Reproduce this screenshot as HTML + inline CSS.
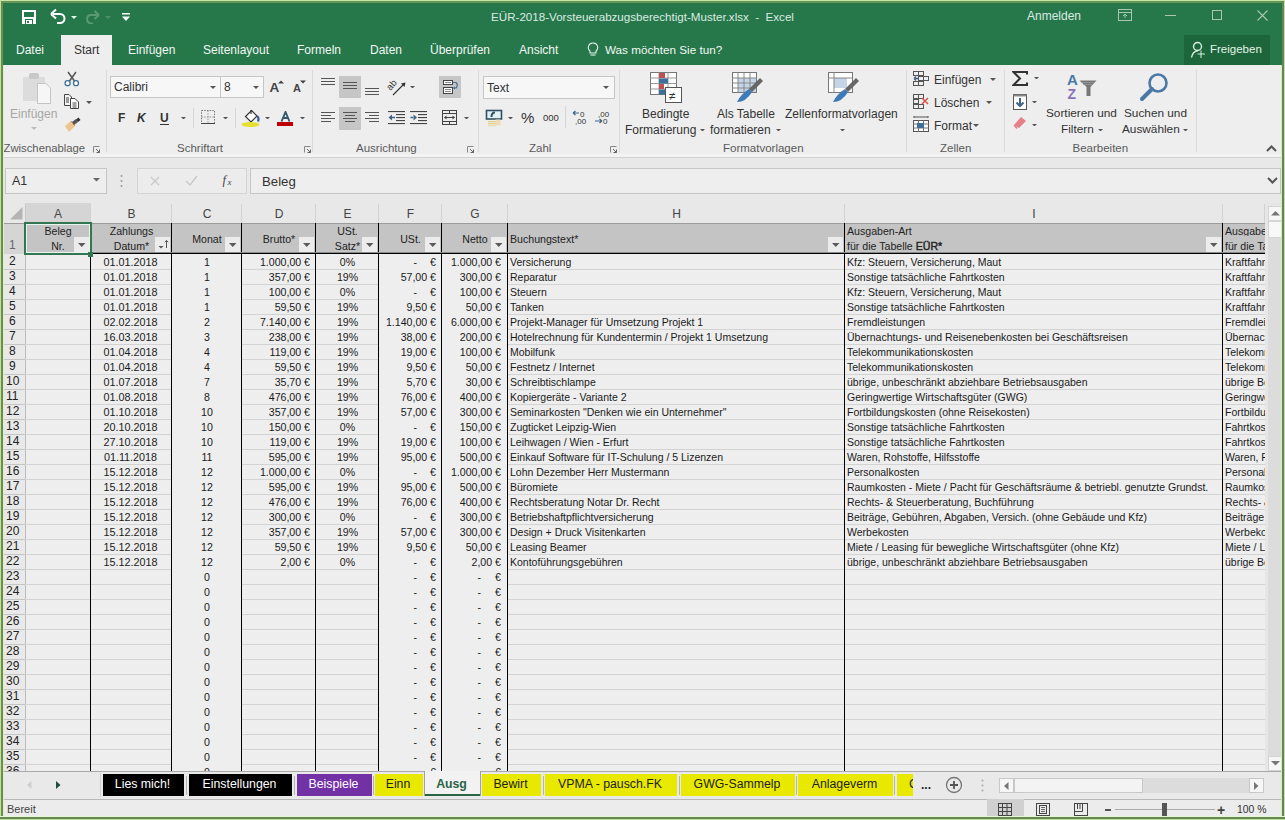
<!DOCTYPE html>
<html><head><meta charset="utf-8"><title>Excel</title><style>
html,body{margin:0;padding:0;}
body{width:1285px;height:820px;position:relative;overflow:hidden;font-family:"Liberation Sans", sans-serif;background:#26784b;}
body>div,body>svg{position:absolute;}
</style></head>
<body>
<div style="left:0px;top:0px;width:1285px;height:820px;background:#26784b"></div><svg style="left:22px;top:10px;" width="14" height="14" viewBox="0 0 14 14"><rect x="0" y="0" width="14" height="14" fill="#fff"/><rect x="2" y="2" width="10" height="5" fill="#26784b"/><rect x="3" y="9" width="8" height="5" fill="#26784b"/><rect x="4" y="10" width="6" height="4" fill="#fff"/><rect x="5" y="11" width="2" height="2" fill="#26784b"/></svg><svg style="left:50px;top:8px;" width="16" height="17" viewBox="0 0 16 17"><path d="M3 6 H10 A4.5 4.5 0 0 1 10 15 H7" fill="none" stroke="#fff" stroke-width="2"/><path d="M1 6 L6 1.5 M1 6 L6 10.5" stroke="#fff" stroke-width="2" fill="none"/></svg><svg style="left:71px;top:15.5px;" width="6" height="3" viewBox="0 0 6 3"><path d="M0 0 L6 0 L3 3 Z" fill="#dfe"/></svg><svg style="left:85px;top:9px;" width="15" height="15" viewBox="0 0 15 15"><path d="M12 6 H5 A4.5 4.5 0 0 0 5 14.5 H8" fill="none" stroke="#5a9a72" stroke-width="2"/><path d="M14 6 L9.5 2 M14 6 L9.5 10" stroke="#5a9a72" stroke-width="2" fill="none"/></svg><svg style="left:105px;top:15.5px;" width="6" height="3" viewBox="0 0 6 3"><path d="M0 0 L6 0 L3 3 Z" fill="#4f8f67"/></svg><svg style="left:121px;top:13px;" width="10" height="9" viewBox="0 0 10 9"><rect x="1" y="0" width="8" height="1.5" fill="#fff"/><path d="M1 3.5 H9 L5 8 Z" fill="#fff"/></svg><div style="left:441px;top:10.68px;width:403px;text-align:center;font-size:11.6px;line-height:11.6px;color:#dcebe1;white-space:pre;">EÜR-2018-Vorsteuerabzugsberechtigt-Muster.xlsx  -  Excel</div><div style="left:1027px;top:10.34px;font-size:12px;line-height:12px;color:#dcebe1;white-space:pre;">Anmelden</div><svg style="left:1118px;top:9px;" width="14" height="12" viewBox="0 0 14 12"><rect x="0.5" y="0.5" width="13" height="11" fill="none" stroke="#a9c7b3"/><path d="M0.5 3.5 H13.5" stroke="#a9c7b3"/><path d="M7 5 V9 M5 7 L7 5 L9 7" stroke="#a9c7b3" fill="none"/></svg><div style="left:1165px;top:15px;width:11px;height:1px;background:#a9c7b3"></div><div style="left:1212px;top:10px;width:10px;height:10px;border:1px solid #a9c7b3;box-sizing:border-box"></div><svg style="left:1257px;top:10px;" width="11" height="11" viewBox="0 0 11 11"><path d="M0.5 0.5 L10.5 10.5 M10.5 0.5 L0.5 10.5" stroke="#a9c7b3" stroke-width="1.1"/></svg><div style="left:61px;top:35px;width:51px;height:31px;background:#eeeeee"></div><div style="left:16px;top:44.14px;font-size:12px;line-height:12px;color:#f2f7f3;white-space:pre;">Datei</div><div style="left:74px;top:44.14px;font-size:12px;line-height:12px;color:#333;white-space:pre;">Start</div><div style="left:128px;top:44.14px;font-size:12px;line-height:12px;color:#f2f7f3;white-space:pre;">Einfügen</div><div style="left:203px;top:44.14px;font-size:12px;line-height:12px;color:#f2f7f3;white-space:pre;">Seitenlayout</div><div style="left:297px;top:44.14px;font-size:12px;line-height:12px;color:#f2f7f3;white-space:pre;">Formeln</div><div style="left:370px;top:44.14px;font-size:12px;line-height:12px;color:#f2f7f3;white-space:pre;">Daten</div><div style="left:430px;top:44.14px;font-size:12px;line-height:12px;color:#f2f7f3;white-space:pre;">Überprüfen</div><div style="left:519px;top:44.14px;font-size:12px;line-height:12px;color:#f2f7f3;white-space:pre;">Ansicht</div><svg style="left:587px;top:42px;" width="12" height="15" viewBox="0 0 12 15"><path d="M6 1 A4.5 4.5 0 0 1 9 9 V11 H3 V9 A4.5 4.5 0 0 1 6 1 Z" fill="none" stroke="#e8f0ea" stroke-width="1.1"/><path d="M3.5 13 H8.5" stroke="#e8f0ea" stroke-width="1.1"/></svg><div style="left:605px;top:44.40px;font-size:11.7px;line-height:11.7px;color:#f2f7f3;white-space:pre;">Was möchten Sie tun?</div><div style="left:1184px;top:35px;width:86px;height:30px;background:#1d663b"></div><svg style="left:1190px;top:41px;" width="17" height="18" viewBox="0 0 17 18"><circle cx="7.5" cy="5.5" r="4" fill="none" stroke="#d8efdf" stroke-width="1.4"/><path d="M1.5 16.5 Q2.5 10.5 8 9.5" fill="none" stroke="#d8efdf" stroke-width="1.4"/><path d="M11 9.5 V17 M7.5 13 H15" stroke="#d8efdf" stroke-width="1"/></svg><div style="left:1210px;top:43.77px;font-size:11.5px;line-height:11.5px;color:#e4f4e8;white-space:pre;">Freigeben</div><div style="left:3px;top:65px;width:1279px;height:92px;background:#eeeeee"></div><div style="left:3px;top:154px;width:1279px;height:3px;background:#f3f3f3"></div><div style="left:3px;top:157px;width:1279px;height:1px;background:#d2d2d2"></div><div style="left:106px;top:70px;width:1px;height:82px;background:#dadada"></div><div style="left:312px;top:70px;width:1px;height:82px;background:#dadada"></div><div style="left:478px;top:70px;width:1px;height:82px;background:#dadada"></div><div style="left:619px;top:70px;width:1px;height:82px;background:#dadada"></div><div style="left:906px;top:70px;width:1px;height:82px;background:#dadada"></div><div style="left:1004px;top:70px;width:1px;height:82px;background:#dadada"></div><div style="left:1196px;top:70px;width:1px;height:82px;background:#dadada"></div><div style="left:3.5px;top:143.43px;font-size:11.3px;line-height:11.3px;color:#5a5a5a;white-space:pre;">Zwischenablage</div><div style="left:177px;top:143.27px;font-size:11.5px;line-height:11.5px;color:#5a5a5a;white-space:pre;">Schriftart</div><div style="left:356px;top:143.27px;font-size:11.5px;line-height:11.5px;color:#5a5a5a;white-space:pre;">Ausrichtung</div><div style="left:529px;top:143.27px;font-size:11.5px;line-height:11.5px;color:#5a5a5a;white-space:pre;">Zahl</div><div style="left:723px;top:143.27px;font-size:11.5px;line-height:11.5px;color:#5a5a5a;white-space:pre;">Formatvorlagen</div><div style="left:940px;top:143.27px;font-size:11.5px;line-height:11.5px;color:#5a5a5a;white-space:pre;">Zellen</div><div style="left:1072.5px;top:143.27px;font-size:11.5px;line-height:11.5px;color:#5a5a5a;white-space:pre;">Bearbeiten</div><svg style="left:93px;top:146px;" width="8" height="7" viewBox="0 0 8 7"><path d="M0.5 6.5 V0.5 H6.5" fill="none" stroke="#888"/><path d="M3 3 L6.5 6.5 M6.5 3.5 V6.5 H3.5" fill="none" stroke="#666"/></svg><svg style="left:304px;top:146px;" width="8" height="7" viewBox="0 0 8 7"><path d="M0.5 6.5 V0.5 H6.5" fill="none" stroke="#888"/><path d="M3 3 L6.5 6.5 M6.5 3.5 V6.5 H3.5" fill="none" stroke="#666"/></svg><svg style="left:467px;top:146px;" width="8" height="7" viewBox="0 0 8 7"><path d="M0.5 6.5 V0.5 H6.5" fill="none" stroke="#888"/><path d="M3 3 L6.5 6.5 M6.5 3.5 V6.5 H3.5" fill="none" stroke="#666"/></svg><svg style="left:610px;top:146px;" width="8" height="7" viewBox="0 0 8 7"><path d="M0.5 6.5 V0.5 H6.5" fill="none" stroke="#888"/><path d="M3 3 L6.5 6.5 M6.5 3.5 V6.5 H3.5" fill="none" stroke="#666"/></svg><svg style="left:1266px;top:145px;" width="11" height="7" viewBox="0 0 11 7"><path d="M1 6 L5.5 1.5 L10 6" fill="none" stroke="#555" stroke-width="2"/></svg><svg style="left:22px;top:72px;" width="30" height="33" viewBox="0 0 30 33"><rect x="1" y="5" width="22" height="24" rx="1" fill="#dcdcdc"/><rect x="7" y="1" width="10" height="6" rx="2" fill="#c8c8c8"/><path d="M15.5 11.5 H24 L28.5 16 V31.5 H15.5 Z" fill="#f6f6f6" stroke="#c4c4c4"/></svg><div style="left:10px;top:107.84px;font-size:12px;line-height:12px;color:#a6a6a6;white-space:pre;">Einfügen</div><svg style="left:31px;top:126.5px;" width="6" height="3" viewBox="0 0 6 3"><path d="M0 0 L6 0 L3 3 Z" fill="#bbb"/></svg><svg style="left:64px;top:71px;" width="16" height="16" viewBox="0 0 16 16"><path d="M4 1 L10.5 10 M12 1 L5.5 10" stroke="#555" stroke-width="1.5"/><circle cx="3.6" cy="12.2" r="2.5" fill="#fff" stroke="#3d6f98" stroke-width="1.3"/><circle cx="12" cy="12.2" r="2.5" fill="#fff" stroke="#3d6f98" stroke-width="1.3"/></svg><svg style="left:64px;top:94px;" width="16" height="16" viewBox="0 0 16 16"><path d="M0.5 0.5 H5 L7.5 3 V11.5 H0.5 Z" fill="#f4f4f4" stroke="#444"/><path d="M2 4 H5 M2 6 H5 M2 8 H5" stroke="#444"/><path d="M6.5 4.5 H11 L14.5 8 V14.5 H6.5 Z" fill="#fff" stroke="#444"/><path d="M8.5 9 H12.5 M8.5 11 H12.5 M8.5 13 H12.5" stroke="#444"/></svg><svg style="left:86px;top:100.5px;" width="6" height="3" viewBox="0 0 6 3"><path d="M0 0 L6 0 L3 3 Z" fill="#555"/></svg><svg style="left:64px;top:117px;" width="17" height="16" viewBox="0 0 17 16"><path d="M1 9 L7 4 L11 9 L5 15 Z" fill="#ebc48f"/><path d="M7 4 L11 9" stroke="#b89060" stroke-width="1"/><path d="M8 5 L12 2 L14 5 L10 8 Z" fill="#555"/><path d="M12 2.5 L14.5 0.5 L16.5 3 L14 5 Z" fill="#333"/></svg><div style="left:110px;top:76px;width:111px;height:22px;background:#f7f7f7;border:1px solid #c6c6c6;box-sizing:border-box"></div><div style="left:114px;top:81.34px;font-size:12px;line-height:12px;color:#333;white-space:pre;">Calibri</div><svg style="left:210px;top:85.5px;" width="6" height="3" viewBox="0 0 6 3"><path d="M0 0 L6 0 L3 3 Z" fill="#555"/></svg><div style="left:220px;top:76px;width:44px;height:22px;background:#f7f7f7;border:1px solid #c6c6c6;box-sizing:border-box"></div><div style="left:224px;top:81.34px;font-size:12px;line-height:12px;color:#333;white-space:pre;">8</div><svg style="left:253px;top:85.5px;" width="6" height="3" viewBox="0 0 6 3"><path d="M0 0 L6 0 L3 3 Z" fill="#555"/></svg><div style="left:269.5px;top:81.37px;font-size:13.5px;line-height:13.5px;color:#444;white-space:pre;font-weight:bold">A</div><svg style="left:278px;top:80px;" width="6" height="4" viewBox="0 0 6 4"><path d="M0 3.5 L3 0.5 L6 3.5 Z" fill="#444"/></svg><div style="left:293px;top:83.49px;font-size:11px;line-height:11px;color:#444;white-space:pre;font-weight:bold">A</div><svg style="left:299.5px;top:80px;" width="6" height="4" viewBox="0 0 6 4"><path d="M0 0.5 L3 3.5 L6 0.5 Z" fill="#444"/></svg><div style="left:118px;top:111.84px;font-size:12px;line-height:12px;color:#333;white-space:pre;font-weight:bold">F</div><div style="left:137px;top:111.84px;font-size:12px;line-height:12px;color:#333;white-space:pre;font-weight:bold;font-style:italic">K</div><div style="left:160px;top:111.84px;font-size:12px;line-height:12px;color:#333;white-space:pre;font-weight:bold">U</div><div style="left:160px;top:124px;width:9px;height:1px;background:#333"></div><svg style="left:180.5px;top:116.75px;" width="5.0" height="2.5" viewBox="0 0 5.0 2.5"><path d="M0 0 L5.0 0 L2.5 2.5 Z" fill="#555"/></svg><div style="left:193px;top:108px;width:1px;height:20px;background:#d6d6d6"></div><svg style="left:201px;top:110px;" width="14" height="14" viewBox="0 0 14 14"><rect x="0.5" y="0.5" width="13" height="13" fill="none" stroke="#777" stroke-dasharray="1.5 1.2"/><path d="M7 0.5 V13.5 M0.5 7 H13.5" stroke="#999" stroke-dasharray="1.5 1.2"/><path d="M0 13.5 H14" stroke="#444"/></svg><svg style="left:222.5px;top:116.75px;" width="5.0" height="2.5" viewBox="0 0 5.0 2.5"><path d="M0 0 L5.0 0 L2.5 2.5 Z" fill="#555"/></svg><div style="left:235px;top:108px;width:1px;height:20px;background:#d6d6d6"></div><svg style="left:240px;top:108px;" width="21" height="19" viewBox="0 0 21 19"><path d="M11.5 2.5 L17 8 L11 14 L5.5 8.5 Z" fill="#fff" stroke="#333" stroke-width="1.2"/><path d="M11 2 V6" stroke="#333" stroke-width="1.2"/><path d="M17 8 Q19.5 10 18 13.5" fill="none" stroke="#3d5fa8" stroke-width="2.2"/><ellipse cx="10.5" cy="16.5" rx="9" ry="2.5" fill="#e8e030"/></svg><svg style="left:264.5px;top:116.75px;" width="5.0" height="2.5" viewBox="0 0 5.0 2.5"><path d="M0 0 L5.0 0 L2.5 2.5 Z" fill="#555"/></svg><svg style="left:277px;top:111px;" width="17" height="16" viewBox="0 0 17 16"><path d="M4.5 10.5 L8.5 1 L12.5 10.5 M6 7 H11" fill="none" stroke="#35586a" stroke-width="1.9"/><rect x="0" y="11" width="16" height="4" fill="#c00000"/></svg><svg style="left:299.5px;top:116.75px;" width="5.0" height="2.5" viewBox="0 0 5.0 2.5"><path d="M0 0 L5.0 0 L2.5 2.5 Z" fill="#555"/></svg><svg style="left:321px;top:78px;" width="14" height="11" viewBox="0 0 14 11"><rect x="0" y="0" width="14" height="1" fill="#555"/><rect x="0" y="3" width="14" height="1" fill="#555"/><rect x="0" y="6" width="14" height="1" fill="#555"/></svg><div style="left:339px;top:76px;width:22px;height:22px;background:#c6c6c6"></div><svg style="left:343px;top:82px;" width="14" height="11" viewBox="0 0 14 11"><rect x="0" y="0" width="14" height="1" fill="#555"/><rect x="0" y="3" width="14" height="1" fill="#555"/><rect x="0" y="6" width="14" height="1" fill="#555"/></svg><svg style="left:365px;top:88px;" width="14" height="11" viewBox="0 0 14 11"><rect x="0" y="0" width="14" height="1" fill="#555"/><rect x="0" y="3" width="14" height="1" fill="#555"/><rect x="0" y="6" width="14" height="1" fill="#555"/></svg><svg style="left:387px;top:78px;" width="20" height="18" viewBox="0 0 20 18"><text x="0" y="0" font-size="9.5" font-family="Liberation Sans" fill="#333" transform="translate(3.5 13) rotate(-50)">ab</text><path d="M6 17 L17 6" stroke="#333" stroke-width="1.1"/><path d="M18.5 4.5 L14 5.5 L17.5 9 Z" fill="#333"/></svg><svg style="left:409.5px;top:85.75px;" width="5.0" height="2.5" viewBox="0 0 5.0 2.5"><path d="M0 0 L5.0 0 L2.5 2.5 Z" fill="#555"/></svg><div style="left:439px;top:76px;width:22px;height:22px;background:#c6c6c6"></div><svg style="left:441px;top:78px;" width="19" height="18" viewBox="0 0 19 18"><rect x="2.5" y="2.5" width="9" height="4" fill="#fff" stroke="#444"/><path d="M4 4.5 H10" stroke="#888"/><rect x="2.5" y="9.5" width="9" height="6" fill="#fff" stroke="#444"/><path d="M4 11.5 H10 M4 13.5 H10" stroke="#888"/><path d="M12 4.5 H15 Q17.5 7 15 10 H12.5" fill="none" stroke="#3d6f98" stroke-width="1.2"/><path d="M12 10 L14 8.5 V11.5 Z" fill="#3d6f98"/></svg><svg style="left:321px;top:112px;" width="14" height="14" viewBox="0 0 14 14"><rect x="0" y="0" width="14" height="1" fill="#555"/><rect x="0" y="3" width="10" height="1" fill="#555"/><rect x="0" y="6" width="14" height="1" fill="#555"/><rect x="0" y="9" width="10" height="1" fill="#555"/></svg><div style="left:339px;top:107px;width:22px;height:23px;background:#c6c6c6"></div><svg style="left:343px;top:112px;" width="14" height="12" viewBox="0 0 14 12"><rect x="0" y="0" width="14" height="1" fill="#555"/><rect x="2" y="3" width="10" height="1" fill="#555"/><rect x="0" y="6" width="14" height="1" fill="#555"/><rect x="2" y="9" width="10" height="1" fill="#555"/></svg><svg style="left:365px;top:112px;" width="14" height="12" viewBox="0 0 14 12"><rect x="0" y="0" width="14" height="1" fill="#555"/><rect x="4" y="3" width="10" height="1" fill="#555"/><rect x="0" y="6" width="14" height="1" fill="#555"/><rect x="4" y="9" width="10" height="1" fill="#555"/></svg><svg style="left:388px;top:110px;" width="17" height="15" viewBox="0 0 17 15"><rect x="0" y="1" width="17" height="1.1" fill="#444"/><rect x="8" y="4" width="9" height="1.1" fill="#444"/><rect x="8" y="7" width="9" height="1.1" fill="#444"/><rect x="8" y="10" width="9" height="1.1" fill="#444"/><rect x="0" y="13" width="17" height="1.1" fill="#444"/><path d="M0.5 7.5 L4 4.5 V10.5 Z M3 6.8 H7 V8.2 H3 Z" fill="#3d6488"/></svg><svg style="left:410px;top:110px;" width="17" height="15" viewBox="0 0 17 15"><rect x="0" y="1" width="17" height="1.1" fill="#444"/><rect x="8" y="4" width="9" height="1.1" fill="#444"/><rect x="8" y="7" width="9" height="1.1" fill="#444"/><rect x="8" y="10" width="9" height="1.1" fill="#444"/><rect x="0" y="13" width="17" height="1.1" fill="#444"/><path d="M7 7.5 L3.5 4.5 V10.5 Z M0.5 6.8 H4 V8.2 H0.5 Z" fill="#3d6488"/></svg><svg style="left:442px;top:110px;" width="15" height="15" viewBox="0 0 15 15"><rect x="0.5" y="0.5" width="14" height="14" fill="none" stroke="#444"/><path d="M0.5 3.5 H14.5 M0.5 11.5 H14.5 M7.5 0.5 V3.5 M7.5 11.5 V14.5" stroke="#444"/><path d="M2.5 7.5 H12.5" stroke="#444"/><path d="M2 7.5 L4.5 5.5 V9.5 Z M13 7.5 L10.5 5.5 V9.5 Z" fill="#444"/></svg><svg style="left:463.5px;top:116.75px;" width="5.0" height="2.5" viewBox="0 0 5.0 2.5"><path d="M0 0 L5.0 0 L2.5 2.5 Z" fill="#555"/></svg><div style="left:483px;top:76px;width:132px;height:23px;background:#f7f7f7;border:1px solid #c6c6c6;box-sizing:border-box"></div><div style="left:487px;top:81.84px;font-size:12px;line-height:12px;color:#333;white-space:pre;">Text</div><svg style="left:603px;top:85.5px;" width="6" height="3" viewBox="0 0 6 3"><path d="M0 0 L6 0 L3 3 Z" fill="#555"/></svg><svg style="left:485px;top:109px;" width="18" height="18" viewBox="0 0 18 18"><rect x="1.5" y="1.5" width="15" height="8.5" fill="#e2f0f4" stroke="#34505e" stroke-width="1.6"/><path d="M6.5 8 Q6.5 3.5 10 3.5" fill="none" stroke="#2f5560" stroke-width="2"/><rect x="3" y="12" width="8" height="1.2" fill="#e6cf80"/><rect x="3" y="14" width="8" height="1.2" fill="#e6cf80"/><rect x="3" y="16" width="8" height="1.2" fill="#ecdca8"/><rect x="10.5" y="10.5" width="5" height="6" fill="#f2dcb8"/></svg><svg style="left:507.5px;top:116.75px;" width="5.0" height="2.5" viewBox="0 0 5.0 2.5"><path d="M0 0 L5.0 0 L2.5 2.5 Z" fill="#555"/></svg><div style="left:521px;top:110.30px;font-size:15px;line-height:15px;color:#333;white-space:pre;">%</div><div style="left:543px;top:112.96px;font-size:9.5px;line-height:9.5px;color:#333;white-space:pre;">000</div><div style="left:565px;top:106px;width:1px;height:22px;background:#d6d6d6"></div><svg style="left:572px;top:109px;" width="17" height="17" viewBox="0 0 17 17"><text x="8" y="8" font-size="8" font-family="Liberation Sans" fill="#333">0</text><text x="3" y="15" font-size="8" font-family="Liberation Sans" fill="#333">,00</text><path d="M1 4 H7 M1 4 L3.5 2 M1 4 L3.5 6" stroke="#3d6488" fill="none" stroke-width="1.2"/></svg><svg style="left:594px;top:109px;" width="17" height="17" viewBox="0 0 17 17"><text x="4" y="8" font-size="8" font-family="Liberation Sans" fill="#333">,00</text><text x="9" y="15" font-size="8" font-family="Liberation Sans" fill="#333">0</text><path d="M1 12 H8 M8 12 L5.5 10 M8 12 L5.5 14" stroke="#3d6488" fill="none" stroke-width="1.2"/></svg><svg style="left:650px;top:72px;" width="33" height="32" viewBox="0 0 33 32"><g stroke="#777" fill="#fff"><rect x="0.5" y="0.5" width="26" height="22"/></g><path d="M9 0.5 V22.5 M18 0.5 V22.5 M0.5 6 H26.5 M0.5 11.5 H26.5 M0.5 17 H26.5" stroke="#999"/><rect x="9" y="1" width="6" height="5" fill="#c0504d"/><rect x="9" y="6.5" width="9" height="5" fill="#3d6f9a"/><rect x="9" y="12" width="5" height="5" fill="#c0504d"/><rect x="9" y="17.5" width="7" height="5" fill="#3d6f9a"/><rect x="15.5" y="15.5" width="16" height="15" fill="#fff" stroke="#555"/><text x="19" y="28" font-size="12" font-family="Liberation Sans" fill="#333">≠</text></svg><div style="left:642px;top:107.84px;font-size:12px;line-height:12px;color:#333;white-space:pre;">Bedingte</div><div style="left:625px;top:123.84px;font-size:12px;line-height:12px;color:#333;white-space:pre;">Formatierung</div><svg style="left:699.5px;top:128.75px;" width="5.0" height="2.5" viewBox="0 0 5.0 2.5"><path d="M0 0 L5.0 0 L2.5 2.5 Z" fill="#555"/></svg><svg style="left:732px;top:72px;" width="31" height="31" viewBox="0 0 31 31"><rect x="0.5" y="0.5" width="24" height="20" fill="#fff" stroke="#777"/><rect x="6" y="6" width="18" height="14" fill="#c5d5e8"/><path d="M6 0.5 V20.5 M12 0.5 V20.5 M18 0.5 V20.5 M0.5 6 H24.5 M0.5 11 H24.5 M0.5 16 H24.5" stroke="#888"/><path d="M28 6 L31 9 L20 20 L17 17 Z" fill="#666"/><path d="M17 17 L20 20 Q14 30 5 30 Q9 22 17 17 Z" fill="#3d7ab8"/></svg><div style="left:717px;top:107.84px;font-size:12px;line-height:12px;color:#333;white-space:pre;">Als Tabelle</div><div style="left:710px;top:123.84px;font-size:12px;line-height:12px;color:#333;white-space:pre;">formatieren</div><svg style="left:775.5px;top:128.75px;" width="5.0" height="2.5" viewBox="0 0 5.0 2.5"><path d="M0 0 L5.0 0 L2.5 2.5 Z" fill="#555"/></svg><svg style="left:828px;top:72px;" width="31" height="31" viewBox="0 0 31 31"><rect x="0.5" y="0.5" width="24" height="20" fill="#fff" stroke="#777"/><rect x="6" y="6" width="13" height="10" fill="#c5d5e8"/><path d="M0.5 6 H24.5 M6 0.5 V20.5" stroke="#888"/><path d="M28 6 L31 9 L20 20 L17 17 Z" fill="#666"/><path d="M17 17 L20 20 Q14 30 5 30 Q9 22 17 17 Z" fill="#3d7ab8"/></svg><div style="left:785px;top:107.84px;font-size:12px;line-height:12px;color:#333;white-space:pre;">Zellenformatvorlagen</div><svg style="left:839.5px;top:128.75px;" width="5.0" height="2.5" viewBox="0 0 5.0 2.5"><path d="M0 0 L5.0 0 L2.5 2.5 Z" fill="#555"/></svg><svg style="left:913px;top:71px;" width="18" height="16" viewBox="0 0 18 16"><rect x="0.5" y="0.5" width="5" height="4" fill="none" stroke="#555"/><rect x="5.5" y="0.5" width="5" height="4" fill="none" stroke="#555"/><rect x="5.5" y="5.5" width="5" height="4" fill="none" stroke="#555"/><rect x="10.5" y="5.5" width="5" height="4" fill="none" stroke="#555"/><rect x="0.5" y="10.5" width="5" height="4" fill="none" stroke="#555"/><rect x="5.5" y="10.5" width="5" height="4" fill="none" stroke="#555"/><path d="M1 7.5 H5 M1 7.5 L3 5.5 M1 7.5 L3 9.5" stroke="#3d6488" fill="none" stroke-width="1.3"/></svg><div style="left:934px;top:73.54px;font-size:12px;line-height:12px;color:#333;white-space:pre;">Einfügen</div><svg style="left:990px;top:77.5px;" width="6" height="3" viewBox="0 0 6 3"><path d="M0 0 L6 0 L3 3 Z" fill="#555"/></svg><svg style="left:913px;top:94px;" width="18" height="16" viewBox="0 0 18 16"><rect x="0.5" y="0.5" width="5" height="4" fill="none" stroke="#555"/><rect x="5.5" y="0.5" width="5" height="4" fill="none" stroke="#555"/><rect x="0.5" y="5.5" width="5" height="4" fill="none" stroke="#555"/><rect x="0.5" y="10.5" width="5" height="4" fill="none" stroke="#555"/><rect x="5.5" y="10.5" width="5" height="4" fill="none" stroke="#555"/><path d="M9 4 L15 10 M15 4 L9 10" stroke="#d9534f" stroke-width="1.5"/></svg><div style="left:934px;top:96.54px;font-size:12px;line-height:12px;color:#333;white-space:pre;">Löschen</div><svg style="left:986px;top:100.5px;" width="6" height="3" viewBox="0 0 6 3"><path d="M0 0 L6 0 L3 3 Z" fill="#555"/></svg><svg style="left:913px;top:116px;" width="18" height="17" viewBox="0 0 18 17"><path d="M1 1 H15 M1 0 V2 M15 0 V2" stroke="#555"/><rect x="0.5" y="4.5" width="15" height="11" fill="#fff" stroke="#555"/><path d="M5.5 4.5 V15.5 M10.5 4.5 V15.5 M0.5 8 H15.5 M0.5 12 H15.5" stroke="#777"/><rect x="4" y="7" width="7" height="5" fill="#3d6f9a"/></svg><div style="left:934px;top:119.54px;font-size:12px;line-height:12px;color:#333;white-space:pre;">Format</div><svg style="left:973px;top:123.5px;" width="6" height="3" viewBox="0 0 6 3"><path d="M0 0 L6 0 L3 3 Z" fill="#555"/></svg><svg style="left:1012px;top:71px;" width="16" height="15" viewBox="0 0 16 15"><path d="M15 3.5 V1 H1.5 L8 7.5 L1.5 14 H15 V11.5" fill="none" stroke="#333" stroke-width="2"/></svg><svg style="left:1033.5px;top:76.75px;" width="5.0" height="2.5" viewBox="0 0 5.0 2.5"><path d="M0 0 L5.0 0 L2.5 2.5 Z" fill="#555"/></svg><svg style="left:1013px;top:94px;" width="14" height="16" viewBox="0 0 14 16"><rect x="0.5" y="0.5" width="13" height="15" fill="#fff" stroke="#555"/><rect x="0.5" y="0.5" width="13" height="2" fill="#888"/><path d="M7 4 V12 M3.5 8.5 L7 12 L10.5 8.5" stroke="#3d6488" stroke-width="2" fill="none"/></svg><svg style="left:1031.5px;top:100.75px;" width="5.0" height="2.5" viewBox="0 0 5.0 2.5"><path d="M0 0 L5.0 0 L2.5 2.5 Z" fill="#555"/></svg><svg style="left:1012px;top:115px;" width="16" height="14" viewBox="0 0 16 14"><path d="M2 10 L9 2 L14 6 L7 13 Z" fill="#e57f8a"/><path d="M2 10 L5 13.5" stroke="#e57f8a" stroke-width="1.5"/></svg><svg style="left:1031.5px;top:123.75px;" width="5.0" height="2.5" viewBox="0 0 5.0 2.5"><path d="M0 0 L5.0 0 L2.5 2.5 Z" fill="#555"/></svg><svg style="left:1066px;top:73px;" width="32" height="28" viewBox="0 0 32 28"><text x="1" y="12.3" font-size="15" font-weight="bold" font-family="Liberation Sans" fill="#4a7aa8">A</text><text x="1.5" y="26.3" font-size="14" font-weight="bold" font-family="Liberation Sans" fill="#8b72b8">Z</text><path d="M13.5 7.5 H30.5 L24.5 14 V23 H20.5 V14 Z" fill="#777"/><path d="M15 9.5 H29 M17 11.5 H27" stroke="#999" stroke-width="0.8"/></svg><div style="left:1046px;top:107.51px;font-size:11.8px;line-height:11.8px;color:#333;white-space:pre;">Sortieren und</div><div style="left:1061px;top:123.51px;font-size:11.8px;line-height:11.8px;color:#333;white-space:pre;">Filtern</div><svg style="left:1097.5px;top:128.75px;" width="5.0" height="2.5" viewBox="0 0 5.0 2.5"><path d="M0 0 L5.0 0 L2.5 2.5 Z" fill="#555"/></svg><svg style="left:1139px;top:72px;" width="31" height="30" viewBox="0 0 31 30"><circle cx="19" cy="11" r="8.5" fill="none" stroke="#4a79a8" stroke-width="2.6"/><path d="M13 17 L3 27" stroke="#4a79a8" stroke-width="4" stroke-linecap="round"/></svg><div style="left:1124px;top:107.51px;font-size:11.8px;line-height:11.8px;color:#333;white-space:pre;">Suchen und</div><div style="left:1122px;top:123.51px;font-size:11.8px;line-height:11.8px;color:#333;white-space:pre;">Auswählen</div><svg style="left:1182.5px;top:128.75px;" width="5.0" height="2.5" viewBox="0 0 5.0 2.5"><path d="M0 0 L5.0 0 L2.5 2.5 Z" fill="#555"/></svg><div style="left:3px;top:158px;width:1279px;height:45px;background:#e8e8e8"></div><div style="left:5px;top:168px;width:102px;height:26px;background:#eeeeee;border:1px solid #c6c6c6;box-sizing:border-box"></div><div style="left:12px;top:175.42px;font-size:12.5px;line-height:12.5px;color:#333;white-space:pre;">A1</div><svg style="left:92.5px;top:178.25px;" width="7.0" height="3.5" viewBox="0 0 7.0 3.5"><path d="M0 0 L7.0 0 L3.5 3.5 Z" fill="#666"/></svg><svg style="left:120px;top:174px;" width="3" height="14" viewBox="0 0 3 14"><circle cx="1.5" cy="2" r="1" fill="#999"/><circle cx="1.5" cy="7" r="1" fill="#999"/><circle cx="1.5" cy="12" r="1" fill="#999"/></svg><div style="left:137px;top:168px;width:110px;height:26px;background:#ececec;border:1px solid #d4d4d4;box-sizing:border-box"></div><svg style="left:150px;top:176px;" width="10" height="10" viewBox="0 0 10 10"><path d="M1 1 L9 9 M9 1 L1 9" stroke="#c8c8c8" stroke-width="1.3"/></svg><svg style="left:185px;top:175px;" width="13" height="11" viewBox="0 0 13 11"><path d="M1 6 L5 10 L12 1" fill="none" stroke="#c8c8c8" stroke-width="1.3"/></svg><div style="left:222.5px;top:174.42px;font-size:12.5px;line-height:12.5px;color:#444;white-space:pre;font-family:'Liberation Serif';font-style:italic">f</div><div style="left:227.5px;top:177.88px;font-size:9px;line-height:9px;color:#444;white-space:pre;font-family:'Liberation Serif';font-style:italic">x</div><div style="left:250px;top:168px;width:1031px;height:26px;background:#eeeeee;border:1px solid #c6c6c6;box-sizing:border-box"></div><div style="left:262px;top:174.83px;font-size:13.2px;line-height:13.2px;color:#333;white-space:pre;">Beleg</div><svg style="left:1267px;top:177px;" width="11" height="7" viewBox="0 0 11 7"><path d="M1 1 L5.5 5.5 L10 1" fill="none" stroke="#555" stroke-width="2"/></svg><div style="left:3px;top:203px;width:1262px;height:568px;background:#eeeeee"></div><div style="left:3px;top:203px;width:1262px;height:20px;background:#e8e8e8"></div><div style="left:25px;top:203px;width:66px;height:20px;background:#d5d5d5"></div><div style="left:90px;top:204px;width:1px;height:19px;background:#d2d2d2"></div><div style="left:25px;top:207.84px;width:66px;text-align:center;font-size:12px;line-height:12px;color:#444;white-space:pre;">A</div><div style="left:171px;top:204px;width:1px;height:19px;background:#d2d2d2"></div><div style="left:91px;top:207.84px;width:81px;text-align:center;font-size:12px;line-height:12px;color:#444;white-space:pre;">B</div><div style="left:241px;top:204px;width:1px;height:19px;background:#d2d2d2"></div><div style="left:172px;top:207.84px;width:70px;text-align:center;font-size:12px;line-height:12px;color:#444;white-space:pre;">C</div><div style="left:315px;top:204px;width:1px;height:19px;background:#d2d2d2"></div><div style="left:242px;top:207.84px;width:74px;text-align:center;font-size:12px;line-height:12px;color:#444;white-space:pre;">D</div><div style="left:378px;top:204px;width:1px;height:19px;background:#d2d2d2"></div><div style="left:316px;top:207.84px;width:63px;text-align:center;font-size:12px;line-height:12px;color:#444;white-space:pre;">E</div><div style="left:441px;top:204px;width:1px;height:19px;background:#d2d2d2"></div><div style="left:379px;top:207.84px;width:63px;text-align:center;font-size:12px;line-height:12px;color:#444;white-space:pre;">F</div><div style="left:507px;top:204px;width:1px;height:19px;background:#d2d2d2"></div><div style="left:442px;top:207.84px;width:66px;text-align:center;font-size:12px;line-height:12px;color:#444;white-space:pre;">G</div><div style="left:844px;top:204px;width:1px;height:19px;background:#d2d2d2"></div><div style="left:508px;top:207.84px;width:337px;text-align:center;font-size:12px;line-height:12px;color:#444;white-space:pre;">H</div><div style="left:1222px;top:204px;width:1px;height:19px;background:#d2d2d2"></div><div style="left:845px;top:207.84px;width:378px;text-align:center;font-size:12px;line-height:12px;color:#444;white-space:pre;">I</div><div style="left:1264px;top:204px;width:1px;height:19px;background:#d2d2d2"></div><div style="left:25px;top:204px;width:1px;height:19px;background:#c8c8c8"></div><svg style="left:10px;top:207px;" width="13" height="13" viewBox="0 0 13 13"><path d="M12.5 0 V12.5 H0 Z" fill="#b4b4b4"/></svg><div style="left:3px;top:223px;width:22px;height:548px;background:#e9e9e9"></div><div style="left:3px;top:223px;width:22px;height:31px;background:#d5d5d5"></div><div style="left:25px;top:223px;width:1px;height:548px;background:#bcbcbc"></div><div style="left:25px;top:223px;width:1240px;height:31px;background:#c4c4c4"></div><div style="left:3px;top:223px;width:1262px;height:1px;background:#9c9c9c"></div><div style="left:9px;top:238.84px;font-size:12px;line-height:12px;color:#666;white-space:pre;">1</div><div style="left:9px;top:255.34px;font-size:12px;line-height:12px;color:#222;white-space:pre;">2</div><div style="left:3px;top:269px;width:22px;height:1px;background:#c4c4c4"></div><div style="left:9px;top:270.34px;font-size:12px;line-height:12px;color:#222;white-space:pre;">3</div><div style="left:3px;top:284px;width:22px;height:1px;background:#c4c4c4"></div><div style="left:9px;top:285.34px;font-size:12px;line-height:12px;color:#222;white-space:pre;">4</div><div style="left:3px;top:299px;width:22px;height:1px;background:#c4c4c4"></div><div style="left:9px;top:300.34px;font-size:12px;line-height:12px;color:#222;white-space:pre;">5</div><div style="left:3px;top:314px;width:22px;height:1px;background:#c4c4c4"></div><div style="left:9px;top:315.34px;font-size:12px;line-height:12px;color:#222;white-space:pre;">6</div><div style="left:3px;top:329px;width:22px;height:1px;background:#c4c4c4"></div><div style="left:9px;top:330.34px;font-size:12px;line-height:12px;color:#222;white-space:pre;">7</div><div style="left:3px;top:344px;width:22px;height:1px;background:#c4c4c4"></div><div style="left:9px;top:345.34px;font-size:12px;line-height:12px;color:#222;white-space:pre;">8</div><div style="left:3px;top:359px;width:22px;height:1px;background:#c4c4c4"></div><div style="left:9px;top:360.34px;font-size:12px;line-height:12px;color:#222;white-space:pre;">9</div><div style="left:3px;top:374px;width:22px;height:1px;background:#c4c4c4"></div><div style="left:6px;top:375.34px;font-size:12px;line-height:12px;color:#222;white-space:pre;">10</div><div style="left:3px;top:389px;width:22px;height:1px;background:#c4c4c4"></div><div style="left:6px;top:390.34px;font-size:12px;line-height:12px;color:#222;white-space:pre;">11</div><div style="left:3px;top:404px;width:22px;height:1px;background:#c4c4c4"></div><div style="left:6px;top:405.34px;font-size:12px;line-height:12px;color:#222;white-space:pre;">12</div><div style="left:3px;top:419px;width:22px;height:1px;background:#c4c4c4"></div><div style="left:6px;top:420.34px;font-size:12px;line-height:12px;color:#222;white-space:pre;">13</div><div style="left:3px;top:434px;width:22px;height:1px;background:#c4c4c4"></div><div style="left:6px;top:435.34px;font-size:12px;line-height:12px;color:#222;white-space:pre;">14</div><div style="left:3px;top:449px;width:22px;height:1px;background:#c4c4c4"></div><div style="left:6px;top:450.34px;font-size:12px;line-height:12px;color:#222;white-space:pre;">15</div><div style="left:3px;top:464px;width:22px;height:1px;background:#c4c4c4"></div><div style="left:6px;top:465.34px;font-size:12px;line-height:12px;color:#222;white-space:pre;">16</div><div style="left:3px;top:479px;width:22px;height:1px;background:#c4c4c4"></div><div style="left:6px;top:480.34px;font-size:12px;line-height:12px;color:#222;white-space:pre;">17</div><div style="left:3px;top:494px;width:22px;height:1px;background:#c4c4c4"></div><div style="left:6px;top:495.34px;font-size:12px;line-height:12px;color:#222;white-space:pre;">18</div><div style="left:3px;top:509px;width:22px;height:1px;background:#c4c4c4"></div><div style="left:6px;top:510.34px;font-size:12px;line-height:12px;color:#222;white-space:pre;">19</div><div style="left:3px;top:524px;width:22px;height:1px;background:#c4c4c4"></div><div style="left:6px;top:525.34px;font-size:12px;line-height:12px;color:#222;white-space:pre;">20</div><div style="left:3px;top:539px;width:22px;height:1px;background:#c4c4c4"></div><div style="left:6px;top:540.34px;font-size:12px;line-height:12px;color:#222;white-space:pre;">21</div><div style="left:3px;top:554px;width:22px;height:1px;background:#c4c4c4"></div><div style="left:6px;top:555.34px;font-size:12px;line-height:12px;color:#222;white-space:pre;">22</div><div style="left:3px;top:569px;width:22px;height:1px;background:#c4c4c4"></div><div style="left:6px;top:570.34px;font-size:12px;line-height:12px;color:#222;white-space:pre;">23</div><div style="left:3px;top:584px;width:22px;height:1px;background:#c4c4c4"></div><div style="left:6px;top:585.34px;font-size:12px;line-height:12px;color:#222;white-space:pre;">24</div><div style="left:3px;top:599px;width:22px;height:1px;background:#c4c4c4"></div><div style="left:6px;top:600.34px;font-size:12px;line-height:12px;color:#222;white-space:pre;">25</div><div style="left:3px;top:614px;width:22px;height:1px;background:#c4c4c4"></div><div style="left:6px;top:615.34px;font-size:12px;line-height:12px;color:#222;white-space:pre;">26</div><div style="left:3px;top:629px;width:22px;height:1px;background:#c4c4c4"></div><div style="left:6px;top:630.34px;font-size:12px;line-height:12px;color:#222;white-space:pre;">27</div><div style="left:3px;top:644px;width:22px;height:1px;background:#c4c4c4"></div><div style="left:6px;top:645.34px;font-size:12px;line-height:12px;color:#222;white-space:pre;">28</div><div style="left:3px;top:659px;width:22px;height:1px;background:#c4c4c4"></div><div style="left:6px;top:660.34px;font-size:12px;line-height:12px;color:#222;white-space:pre;">29</div><div style="left:3px;top:674px;width:22px;height:1px;background:#c4c4c4"></div><div style="left:6px;top:675.34px;font-size:12px;line-height:12px;color:#222;white-space:pre;">30</div><div style="left:3px;top:689px;width:22px;height:1px;background:#c4c4c4"></div><div style="left:6px;top:690.34px;font-size:12px;line-height:12px;color:#222;white-space:pre;">31</div><div style="left:3px;top:704px;width:22px;height:1px;background:#c4c4c4"></div><div style="left:6px;top:705.34px;font-size:12px;line-height:12px;color:#222;white-space:pre;">32</div><div style="left:3px;top:719px;width:22px;height:1px;background:#c4c4c4"></div><div style="left:6px;top:720.34px;font-size:12px;line-height:12px;color:#222;white-space:pre;">33</div><div style="left:3px;top:734px;width:22px;height:1px;background:#c4c4c4"></div><div style="left:6px;top:735.34px;font-size:12px;line-height:12px;color:#222;white-space:pre;">34</div><div style="left:3px;top:749px;width:22px;height:1px;background:#c4c4c4"></div><div style="left:6px;top:750.34px;font-size:12px;line-height:12px;color:#222;white-space:pre;">35</div><div style="left:3px;top:764px;width:22px;height:1px;background:#c4c4c4"></div><div style="left:6px;top:765.34px;font-size:12px;line-height:12px;color:#222;white-space:pre;">36</div><div style="left:25px;top:269px;width:146px;height:1px;background:#d3d3d3"></div><div style="left:242px;top:269px;width:136px;height:1px;background:#d3d3d3"></div><div style="left:508px;top:269px;width:757px;height:1px;background:#d3d3d3"></div><div style="left:25px;top:284px;width:146px;height:1px;background:#d3d3d3"></div><div style="left:242px;top:284px;width:136px;height:1px;background:#d3d3d3"></div><div style="left:508px;top:284px;width:757px;height:1px;background:#d3d3d3"></div><div style="left:25px;top:299px;width:146px;height:1px;background:#d3d3d3"></div><div style="left:242px;top:299px;width:136px;height:1px;background:#d3d3d3"></div><div style="left:508px;top:299px;width:757px;height:1px;background:#d3d3d3"></div><div style="left:25px;top:314px;width:146px;height:1px;background:#d3d3d3"></div><div style="left:242px;top:314px;width:136px;height:1px;background:#d3d3d3"></div><div style="left:508px;top:314px;width:757px;height:1px;background:#d3d3d3"></div><div style="left:25px;top:329px;width:146px;height:1px;background:#d3d3d3"></div><div style="left:242px;top:329px;width:136px;height:1px;background:#d3d3d3"></div><div style="left:508px;top:329px;width:757px;height:1px;background:#d3d3d3"></div><div style="left:25px;top:344px;width:146px;height:1px;background:#d3d3d3"></div><div style="left:242px;top:344px;width:136px;height:1px;background:#d3d3d3"></div><div style="left:508px;top:344px;width:757px;height:1px;background:#d3d3d3"></div><div style="left:25px;top:359px;width:146px;height:1px;background:#d3d3d3"></div><div style="left:242px;top:359px;width:136px;height:1px;background:#d3d3d3"></div><div style="left:508px;top:359px;width:757px;height:1px;background:#d3d3d3"></div><div style="left:25px;top:374px;width:146px;height:1px;background:#d3d3d3"></div><div style="left:242px;top:374px;width:136px;height:1px;background:#d3d3d3"></div><div style="left:508px;top:374px;width:757px;height:1px;background:#d3d3d3"></div><div style="left:25px;top:389px;width:146px;height:1px;background:#d3d3d3"></div><div style="left:242px;top:389px;width:136px;height:1px;background:#d3d3d3"></div><div style="left:508px;top:389px;width:757px;height:1px;background:#d3d3d3"></div><div style="left:25px;top:404px;width:146px;height:1px;background:#d3d3d3"></div><div style="left:242px;top:404px;width:136px;height:1px;background:#d3d3d3"></div><div style="left:508px;top:404px;width:757px;height:1px;background:#d3d3d3"></div><div style="left:25px;top:419px;width:146px;height:1px;background:#d3d3d3"></div><div style="left:242px;top:419px;width:136px;height:1px;background:#d3d3d3"></div><div style="left:508px;top:419px;width:757px;height:1px;background:#d3d3d3"></div><div style="left:25px;top:434px;width:146px;height:1px;background:#d3d3d3"></div><div style="left:242px;top:434px;width:136px;height:1px;background:#d3d3d3"></div><div style="left:508px;top:434px;width:757px;height:1px;background:#d3d3d3"></div><div style="left:25px;top:449px;width:146px;height:1px;background:#d3d3d3"></div><div style="left:242px;top:449px;width:136px;height:1px;background:#d3d3d3"></div><div style="left:508px;top:449px;width:757px;height:1px;background:#d3d3d3"></div><div style="left:25px;top:464px;width:146px;height:1px;background:#d3d3d3"></div><div style="left:242px;top:464px;width:136px;height:1px;background:#d3d3d3"></div><div style="left:508px;top:464px;width:757px;height:1px;background:#d3d3d3"></div><div style="left:25px;top:479px;width:146px;height:1px;background:#d3d3d3"></div><div style="left:242px;top:479px;width:136px;height:1px;background:#d3d3d3"></div><div style="left:508px;top:479px;width:757px;height:1px;background:#d3d3d3"></div><div style="left:25px;top:494px;width:146px;height:1px;background:#d3d3d3"></div><div style="left:242px;top:494px;width:136px;height:1px;background:#d3d3d3"></div><div style="left:508px;top:494px;width:757px;height:1px;background:#d3d3d3"></div><div style="left:25px;top:509px;width:146px;height:1px;background:#d3d3d3"></div><div style="left:242px;top:509px;width:136px;height:1px;background:#d3d3d3"></div><div style="left:508px;top:509px;width:757px;height:1px;background:#d3d3d3"></div><div style="left:25px;top:524px;width:146px;height:1px;background:#d3d3d3"></div><div style="left:242px;top:524px;width:136px;height:1px;background:#d3d3d3"></div><div style="left:508px;top:524px;width:757px;height:1px;background:#d3d3d3"></div><div style="left:25px;top:539px;width:146px;height:1px;background:#d3d3d3"></div><div style="left:242px;top:539px;width:136px;height:1px;background:#d3d3d3"></div><div style="left:508px;top:539px;width:757px;height:1px;background:#d3d3d3"></div><div style="left:25px;top:554px;width:146px;height:1px;background:#d3d3d3"></div><div style="left:242px;top:554px;width:136px;height:1px;background:#d3d3d3"></div><div style="left:508px;top:554px;width:757px;height:1px;background:#d3d3d3"></div><div style="left:25px;top:569px;width:146px;height:1px;background:#d3d3d3"></div><div style="left:242px;top:569px;width:136px;height:1px;background:#d3d3d3"></div><div style="left:508px;top:569px;width:757px;height:1px;background:#d3d3d3"></div><div style="left:25px;top:584px;width:146px;height:1px;background:#d3d3d3"></div><div style="left:242px;top:584px;width:136px;height:1px;background:#d3d3d3"></div><div style="left:508px;top:584px;width:757px;height:1px;background:#d3d3d3"></div><div style="left:25px;top:599px;width:146px;height:1px;background:#d3d3d3"></div><div style="left:242px;top:599px;width:136px;height:1px;background:#d3d3d3"></div><div style="left:508px;top:599px;width:757px;height:1px;background:#d3d3d3"></div><div style="left:25px;top:614px;width:146px;height:1px;background:#d3d3d3"></div><div style="left:242px;top:614px;width:136px;height:1px;background:#d3d3d3"></div><div style="left:508px;top:614px;width:757px;height:1px;background:#d3d3d3"></div><div style="left:25px;top:629px;width:146px;height:1px;background:#d3d3d3"></div><div style="left:242px;top:629px;width:136px;height:1px;background:#d3d3d3"></div><div style="left:508px;top:629px;width:757px;height:1px;background:#d3d3d3"></div><div style="left:25px;top:644px;width:146px;height:1px;background:#d3d3d3"></div><div style="left:242px;top:644px;width:136px;height:1px;background:#d3d3d3"></div><div style="left:508px;top:644px;width:757px;height:1px;background:#d3d3d3"></div><div style="left:25px;top:659px;width:146px;height:1px;background:#d3d3d3"></div><div style="left:242px;top:659px;width:136px;height:1px;background:#d3d3d3"></div><div style="left:508px;top:659px;width:757px;height:1px;background:#d3d3d3"></div><div style="left:25px;top:674px;width:146px;height:1px;background:#d3d3d3"></div><div style="left:242px;top:674px;width:136px;height:1px;background:#d3d3d3"></div><div style="left:508px;top:674px;width:757px;height:1px;background:#d3d3d3"></div><div style="left:25px;top:689px;width:146px;height:1px;background:#d3d3d3"></div><div style="left:242px;top:689px;width:136px;height:1px;background:#d3d3d3"></div><div style="left:508px;top:689px;width:757px;height:1px;background:#d3d3d3"></div><div style="left:25px;top:704px;width:146px;height:1px;background:#d3d3d3"></div><div style="left:242px;top:704px;width:136px;height:1px;background:#d3d3d3"></div><div style="left:508px;top:704px;width:757px;height:1px;background:#d3d3d3"></div><div style="left:25px;top:719px;width:146px;height:1px;background:#d3d3d3"></div><div style="left:242px;top:719px;width:136px;height:1px;background:#d3d3d3"></div><div style="left:508px;top:719px;width:757px;height:1px;background:#d3d3d3"></div><div style="left:25px;top:734px;width:146px;height:1px;background:#d3d3d3"></div><div style="left:242px;top:734px;width:136px;height:1px;background:#d3d3d3"></div><div style="left:508px;top:734px;width:757px;height:1px;background:#d3d3d3"></div><div style="left:25px;top:749px;width:146px;height:1px;background:#d3d3d3"></div><div style="left:242px;top:749px;width:136px;height:1px;background:#d3d3d3"></div><div style="left:508px;top:749px;width:757px;height:1px;background:#d3d3d3"></div><div style="left:25px;top:764px;width:146px;height:1px;background:#d3d3d3"></div><div style="left:242px;top:764px;width:136px;height:1px;background:#d3d3d3"></div><div style="left:508px;top:764px;width:757px;height:1px;background:#d3d3d3"></div><div style="left:90px;top:223px;width:1px;height:548px;background:#000"></div><div style="left:171px;top:223px;width:1px;height:548px;background:#000"></div><div style="left:241px;top:223px;width:1px;height:548px;background:#000"></div><div style="left:315px;top:223px;width:1px;height:548px;background:#000"></div><div style="left:378px;top:223px;width:1px;height:548px;background:#000"></div><div style="left:441px;top:223px;width:1px;height:548px;background:#000"></div><div style="left:507px;top:223px;width:1px;height:548px;background:#000"></div><div style="left:844px;top:223px;width:1px;height:548px;background:#000"></div><div style="left:1222px;top:223px;width:1px;height:548px;background:#000"></div><div style="left:25px;top:252px;width:1240px;height:1px;background:#8a8a8a"></div><div style="left:25px;top:253px;width:1240px;height:1px;background:#000"></div><div style="left:24px;top:222px;width:68px;height:33px;border:2px solid #347553;box-sizing:border-box"></div><div style="left:26px;top:224px;width:64px;height:29px;border:1px solid #e6f6ee;box-sizing:border-box"></div><div style="left:88px;top:252px;width:5px;height:5px;background:#347553"></div><div style="left:25px;top:225.63px;width:66px;text-align:center;font-size:10.6px;line-height:10.6px;color:#222;white-space:pre;">Beleg</div><div style="left:25px;top:241.03px;width:66px;text-align:center;font-size:10.6px;line-height:10.6px;color:#222;white-space:pre;">Nr.</div><div style="left:74px;top:237px;width:15px;height:15px;background:#ececec"></div><svg style="left:78px;top:243px;" width="8" height="5" viewBox="0 0 8 5"><path d="M0 0 H7.5 L3.75 4 Z" fill="#5a5a5a"/></svg><div style="left:91px;top:225.93px;width:81px;text-align:center;font-size:10.6px;line-height:10.6px;color:#222;white-space:pre;">Zahlungs</div><div style="left:91px;top:241.03px;width:81px;text-align:center;font-size:10.6px;line-height:10.6px;color:#222;white-space:pre;">Datum*</div><div style="left:155px;top:237px;width:15px;height:15px;background:#ececec"></div><svg style="left:157px;top:239px;" width="12" height="11" viewBox="0 0 12 11"><path d="M1.5 7 H6.5 L4 9.5 Z" fill="#555"/><path d="M9.5 9 V1.5 M7.8 3.2 L9.5 1.5 L11.2 3.2" stroke="#555" fill="none" stroke-width="1"/></svg><div style="left:172px;top:233.63px;width:70px;text-align:center;font-size:10.6px;line-height:10.6px;color:#222;white-space:pre;">Monat</div><div style="left:225px;top:237px;width:15px;height:15px;background:#ececec"></div><svg style="left:229px;top:243px;" width="8" height="5" viewBox="0 0 8 5"><path d="M0 0 H7.5 L3.75 4 Z" fill="#5a5a5a"/></svg><div style="left:242px;top:234.03px;width:74px;text-align:center;font-size:10.6px;line-height:10.6px;color:#222;white-space:pre;">Brutto*</div><div style="left:299px;top:237px;width:15px;height:15px;background:#ececec"></div><svg style="left:303px;top:243px;" width="8" height="5" viewBox="0 0 8 5"><path d="M0 0 H7.5 L3.75 4 Z" fill="#5a5a5a"/></svg><div style="left:316px;top:225.73px;width:63px;text-align:center;font-size:10.6px;line-height:10.6px;color:#222;white-space:pre;">USt.</div><div style="left:316px;top:241.03px;width:63px;text-align:center;font-size:10.6px;line-height:10.6px;color:#222;white-space:pre;">Satz*</div><div style="left:362px;top:237px;width:15px;height:15px;background:#ececec"></div><svg style="left:366px;top:243px;" width="8" height="5" viewBox="0 0 8 5"><path d="M0 0 H7.5 L3.75 4 Z" fill="#5a5a5a"/></svg><div style="left:379px;top:234.03px;width:63px;text-align:center;font-size:10.6px;line-height:10.6px;color:#222;white-space:pre;">USt.</div><div style="left:425px;top:237px;width:15px;height:15px;background:#ececec"></div><svg style="left:429px;top:243px;" width="8" height="5" viewBox="0 0 8 5"><path d="M0 0 H7.5 L3.75 4 Z" fill="#5a5a5a"/></svg><div style="left:442px;top:234.03px;width:66px;text-align:center;font-size:10.6px;line-height:10.6px;color:#222;white-space:pre;">Netto</div><div style="left:491px;top:237px;width:15px;height:15px;background:#ececec"></div><svg style="left:495px;top:243px;" width="8" height="5" viewBox="0 0 8 5"><path d="M0 0 H7.5 L3.75 4 Z" fill="#5a5a5a"/></svg><div style="left:510px;top:234.03px;font-size:10.6px;line-height:10.6px;color:#222;white-space:pre;">Buchungstext*</div><div style="left:828px;top:237px;width:15px;height:15px;background:#ececec"></div><svg style="left:832px;top:243px;" width="8" height="5" viewBox="0 0 8 5"><path d="M0 0 H7.5 L3.75 4 Z" fill="#5a5a5a"/></svg><div style="left:847px;top:225.63px;font-size:10.6px;line-height:10.6px;color:#222;white-space:pre;">Ausgaben-Art</div><div style="left:847px;top:240.63px;font-size:10.6px;line-height:10.6px;color:#222;white-space:pre;">für die Tabelle <span style="-webkit-text-stroke:0.4px #222">EÜR*</span></div><div style="left:1206px;top:237px;width:15px;height:15px;background:#ececec"></div><svg style="left:1210px;top:243px;" width="8" height="5" viewBox="0 0 8 5"><path d="M0 0 H7.5 L3.75 4 Z" fill="#5a5a5a"/></svg><div style="left:1225px;top:225.63px;font-size:10.6px;line-height:10.6px;color:#222;white-space:pre;width:40px;overflow:hidden">Ausgaben-Art</div><div style="left:1225px;top:240.63px;font-size:10.6px;line-height:10.6px;color:#222;white-space:pre;width:40px;overflow:hidden">für die Tabelle</div><div style="left:90px;top:257.06px;width:81px;text-align:center;font-size:10.8px;line-height:10.8px;color:#1a1a1a;white-space:pre;">01.01.2018</div><div style="left:172px;top:256.63px;width:70px;text-align:center;font-size:10.6px;line-height:10.6px;color:#1a1a1a;white-space:pre;">1</div><div style="left:-90px;top:256.63px;width:400px;text-align:right;font-size:10.6px;line-height:10.6px;color:#1a1a1a;white-space:pre;">1.000,00 €</div><div style="left:316px;top:256.63px;width:63px;text-align:center;font-size:10.6px;line-height:10.6px;color:#1a1a1a;white-space:pre;">0%</div><div style="left:17px;top:256.63px;width:400px;text-align:right;font-size:10.6px;line-height:10.6px;color:#1a1a1a;white-space:pre;">-</div><div style="left:36px;top:256.63px;width:400px;text-align:right;font-size:10.6px;line-height:10.6px;color:#1a1a1a;white-space:pre;">€</div><div style="left:101px;top:256.63px;width:400px;text-align:right;font-size:10.6px;line-height:10.6px;color:#1a1a1a;white-space:pre;">1.000,00 €</div><div style="left:510px;top:257.01px;font-size:10.5px;line-height:10.5px;color:#1a1a1a;white-space:pre;">Versicherung</div><div style="left:847px;top:257.01px;font-size:10.5px;line-height:10.5px;color:#1a1a1a;white-space:pre;">Kfz: Steuern, Versicherung, Maut</div><div style="left:1225px;top:257.01px;font-size:10.5px;line-height:10.5px;color:#1a1a1a;white-space:pre;width:40px;overflow:hidden">Kraftfahrzeugkosten</div><div style="left:90px;top:272.06px;width:81px;text-align:center;font-size:10.8px;line-height:10.8px;color:#1a1a1a;white-space:pre;">01.01.2018</div><div style="left:172px;top:271.63px;width:70px;text-align:center;font-size:10.6px;line-height:10.6px;color:#1a1a1a;white-space:pre;">1</div><div style="left:-90px;top:271.63px;width:400px;text-align:right;font-size:10.6px;line-height:10.6px;color:#1a1a1a;white-space:pre;">357,00 €</div><div style="left:316px;top:271.63px;width:63px;text-align:center;font-size:10.6px;line-height:10.6px;color:#1a1a1a;white-space:pre;">19%</div><div style="left:36px;top:271.63px;width:400px;text-align:right;font-size:10.6px;line-height:10.6px;color:#1a1a1a;white-space:pre;">57,00 €</div><div style="left:101px;top:271.63px;width:400px;text-align:right;font-size:10.6px;line-height:10.6px;color:#1a1a1a;white-space:pre;">300,00 €</div><div style="left:510px;top:272.01px;font-size:10.5px;line-height:10.5px;color:#1a1a1a;white-space:pre;">Reparatur</div><div style="left:847px;top:272.01px;font-size:10.5px;line-height:10.5px;color:#1a1a1a;white-space:pre;">Sonstige tatsächliche Fahrtkosten</div><div style="left:1225px;top:272.01px;font-size:10.5px;line-height:10.5px;color:#1a1a1a;white-space:pre;width:40px;overflow:hidden">Kraftfahrzeugkosten</div><div style="left:90px;top:287.06px;width:81px;text-align:center;font-size:10.8px;line-height:10.8px;color:#1a1a1a;white-space:pre;">01.01.2018</div><div style="left:172px;top:286.63px;width:70px;text-align:center;font-size:10.6px;line-height:10.6px;color:#1a1a1a;white-space:pre;">1</div><div style="left:-90px;top:286.63px;width:400px;text-align:right;font-size:10.6px;line-height:10.6px;color:#1a1a1a;white-space:pre;">100,00 €</div><div style="left:316px;top:286.63px;width:63px;text-align:center;font-size:10.6px;line-height:10.6px;color:#1a1a1a;white-space:pre;">0%</div><div style="left:17px;top:286.63px;width:400px;text-align:right;font-size:10.6px;line-height:10.6px;color:#1a1a1a;white-space:pre;">-</div><div style="left:36px;top:286.63px;width:400px;text-align:right;font-size:10.6px;line-height:10.6px;color:#1a1a1a;white-space:pre;">€</div><div style="left:101px;top:286.63px;width:400px;text-align:right;font-size:10.6px;line-height:10.6px;color:#1a1a1a;white-space:pre;">100,00 €</div><div style="left:510px;top:287.01px;font-size:10.5px;line-height:10.5px;color:#1a1a1a;white-space:pre;">Steuern</div><div style="left:847px;top:287.01px;font-size:10.5px;line-height:10.5px;color:#1a1a1a;white-space:pre;">Kfz: Steuern, Versicherung, Maut</div><div style="left:1225px;top:287.01px;font-size:10.5px;line-height:10.5px;color:#1a1a1a;white-space:pre;width:40px;overflow:hidden">Kraftfahrzeugkosten</div><div style="left:90px;top:302.06px;width:81px;text-align:center;font-size:10.8px;line-height:10.8px;color:#1a1a1a;white-space:pre;">01.01.2018</div><div style="left:172px;top:301.63px;width:70px;text-align:center;font-size:10.6px;line-height:10.6px;color:#1a1a1a;white-space:pre;">1</div><div style="left:-90px;top:301.63px;width:400px;text-align:right;font-size:10.6px;line-height:10.6px;color:#1a1a1a;white-space:pre;">59,50 €</div><div style="left:316px;top:301.63px;width:63px;text-align:center;font-size:10.6px;line-height:10.6px;color:#1a1a1a;white-space:pre;">19%</div><div style="left:36px;top:301.63px;width:400px;text-align:right;font-size:10.6px;line-height:10.6px;color:#1a1a1a;white-space:pre;">9,50 €</div><div style="left:101px;top:301.63px;width:400px;text-align:right;font-size:10.6px;line-height:10.6px;color:#1a1a1a;white-space:pre;">50,00 €</div><div style="left:510px;top:302.01px;font-size:10.5px;line-height:10.5px;color:#1a1a1a;white-space:pre;">Tanken</div><div style="left:847px;top:302.01px;font-size:10.5px;line-height:10.5px;color:#1a1a1a;white-space:pre;">Sonstige tatsächliche Fahrtkosten</div><div style="left:1225px;top:302.01px;font-size:10.5px;line-height:10.5px;color:#1a1a1a;white-space:pre;width:40px;overflow:hidden">Kraftfahrzeugkosten</div><div style="left:90px;top:317.06px;width:81px;text-align:center;font-size:10.8px;line-height:10.8px;color:#1a1a1a;white-space:pre;">02.02.2018</div><div style="left:172px;top:316.63px;width:70px;text-align:center;font-size:10.6px;line-height:10.6px;color:#1a1a1a;white-space:pre;">2</div><div style="left:-90px;top:316.63px;width:400px;text-align:right;font-size:10.6px;line-height:10.6px;color:#1a1a1a;white-space:pre;">7.140,00 €</div><div style="left:316px;top:316.63px;width:63px;text-align:center;font-size:10.6px;line-height:10.6px;color:#1a1a1a;white-space:pre;">19%</div><div style="left:36px;top:316.63px;width:400px;text-align:right;font-size:10.6px;line-height:10.6px;color:#1a1a1a;white-space:pre;">1.140,00 €</div><div style="left:101px;top:316.63px;width:400px;text-align:right;font-size:10.6px;line-height:10.6px;color:#1a1a1a;white-space:pre;">6.000,00 €</div><div style="left:510px;top:317.01px;font-size:10.5px;line-height:10.5px;color:#1a1a1a;white-space:pre;">Projekt-Manager für Umsetzung Projekt 1</div><div style="left:847px;top:317.01px;font-size:10.5px;line-height:10.5px;color:#1a1a1a;white-space:pre;">Fremdleistungen</div><div style="left:1225px;top:317.01px;font-size:10.5px;line-height:10.5px;color:#1a1a1a;white-space:pre;width:40px;overflow:hidden">Fremdleistungen</div><div style="left:90px;top:332.06px;width:81px;text-align:center;font-size:10.8px;line-height:10.8px;color:#1a1a1a;white-space:pre;">16.03.2018</div><div style="left:172px;top:331.63px;width:70px;text-align:center;font-size:10.6px;line-height:10.6px;color:#1a1a1a;white-space:pre;">3</div><div style="left:-90px;top:331.63px;width:400px;text-align:right;font-size:10.6px;line-height:10.6px;color:#1a1a1a;white-space:pre;">238,00 €</div><div style="left:316px;top:331.63px;width:63px;text-align:center;font-size:10.6px;line-height:10.6px;color:#1a1a1a;white-space:pre;">19%</div><div style="left:36px;top:331.63px;width:400px;text-align:right;font-size:10.6px;line-height:10.6px;color:#1a1a1a;white-space:pre;">38,00 €</div><div style="left:101px;top:331.63px;width:400px;text-align:right;font-size:10.6px;line-height:10.6px;color:#1a1a1a;white-space:pre;">200,00 €</div><div style="left:510px;top:332.01px;font-size:10.5px;line-height:10.5px;color:#1a1a1a;white-space:pre;">Hotelrechnung für Kundentermin / Projekt 1 Umsetzung</div><div style="left:847px;top:332.01px;font-size:10.5px;line-height:10.5px;color:#1a1a1a;white-space:pre;">Übernachtungs- und Reisenebenkosten bei Geschäftsreisen</div><div style="left:1225px;top:332.01px;font-size:10.5px;line-height:10.5px;color:#1a1a1a;white-space:pre;width:40px;overflow:hidden">Übernachtungskosten</div><div style="left:90px;top:347.06px;width:81px;text-align:center;font-size:10.8px;line-height:10.8px;color:#1a1a1a;white-space:pre;">01.04.2018</div><div style="left:172px;top:346.63px;width:70px;text-align:center;font-size:10.6px;line-height:10.6px;color:#1a1a1a;white-space:pre;">4</div><div style="left:-90px;top:346.63px;width:400px;text-align:right;font-size:10.6px;line-height:10.6px;color:#1a1a1a;white-space:pre;">119,00 €</div><div style="left:316px;top:346.63px;width:63px;text-align:center;font-size:10.6px;line-height:10.6px;color:#1a1a1a;white-space:pre;">19%</div><div style="left:36px;top:346.63px;width:400px;text-align:right;font-size:10.6px;line-height:10.6px;color:#1a1a1a;white-space:pre;">19,00 €</div><div style="left:101px;top:346.63px;width:400px;text-align:right;font-size:10.6px;line-height:10.6px;color:#1a1a1a;white-space:pre;">100,00 €</div><div style="left:510px;top:347.01px;font-size:10.5px;line-height:10.5px;color:#1a1a1a;white-space:pre;">Mobilfunk</div><div style="left:847px;top:347.01px;font-size:10.5px;line-height:10.5px;color:#1a1a1a;white-space:pre;">Telekommunikationskosten</div><div style="left:1225px;top:347.01px;font-size:10.5px;line-height:10.5px;color:#1a1a1a;white-space:pre;width:40px;overflow:hidden">Telekommunikation</div><div style="left:90px;top:362.06px;width:81px;text-align:center;font-size:10.8px;line-height:10.8px;color:#1a1a1a;white-space:pre;">01.04.2018</div><div style="left:172px;top:361.63px;width:70px;text-align:center;font-size:10.6px;line-height:10.6px;color:#1a1a1a;white-space:pre;">4</div><div style="left:-90px;top:361.63px;width:400px;text-align:right;font-size:10.6px;line-height:10.6px;color:#1a1a1a;white-space:pre;">59,50 €</div><div style="left:316px;top:361.63px;width:63px;text-align:center;font-size:10.6px;line-height:10.6px;color:#1a1a1a;white-space:pre;">19%</div><div style="left:36px;top:361.63px;width:400px;text-align:right;font-size:10.6px;line-height:10.6px;color:#1a1a1a;white-space:pre;">9,50 €</div><div style="left:101px;top:361.63px;width:400px;text-align:right;font-size:10.6px;line-height:10.6px;color:#1a1a1a;white-space:pre;">50,00 €</div><div style="left:510px;top:362.01px;font-size:10.5px;line-height:10.5px;color:#1a1a1a;white-space:pre;">Festnetz / Internet</div><div style="left:847px;top:362.01px;font-size:10.5px;line-height:10.5px;color:#1a1a1a;white-space:pre;">Telekommunikationskosten</div><div style="left:1225px;top:362.01px;font-size:10.5px;line-height:10.5px;color:#1a1a1a;white-space:pre;width:40px;overflow:hidden">Telekommunikation</div><div style="left:90px;top:377.06px;width:81px;text-align:center;font-size:10.8px;line-height:10.8px;color:#1a1a1a;white-space:pre;">01.07.2018</div><div style="left:172px;top:376.63px;width:70px;text-align:center;font-size:10.6px;line-height:10.6px;color:#1a1a1a;white-space:pre;">7</div><div style="left:-90px;top:376.63px;width:400px;text-align:right;font-size:10.6px;line-height:10.6px;color:#1a1a1a;white-space:pre;">35,70 €</div><div style="left:316px;top:376.63px;width:63px;text-align:center;font-size:10.6px;line-height:10.6px;color:#1a1a1a;white-space:pre;">19%</div><div style="left:36px;top:376.63px;width:400px;text-align:right;font-size:10.6px;line-height:10.6px;color:#1a1a1a;white-space:pre;">5,70 €</div><div style="left:101px;top:376.63px;width:400px;text-align:right;font-size:10.6px;line-height:10.6px;color:#1a1a1a;white-space:pre;">30,00 €</div><div style="left:510px;top:377.01px;font-size:10.5px;line-height:10.5px;color:#1a1a1a;white-space:pre;">Schreibtischlampe</div><div style="left:847px;top:377.01px;font-size:10.5px;line-height:10.5px;color:#1a1a1a;white-space:pre;">übrige, unbeschränkt abziehbare Betriebsausgaben</div><div style="left:1225px;top:377.01px;font-size:10.5px;line-height:10.5px;color:#1a1a1a;white-space:pre;width:40px;overflow:hidden">übrige Betriebsausgaben</div><div style="left:90px;top:392.06px;width:81px;text-align:center;font-size:10.8px;line-height:10.8px;color:#1a1a1a;white-space:pre;">01.08.2018</div><div style="left:172px;top:391.63px;width:70px;text-align:center;font-size:10.6px;line-height:10.6px;color:#1a1a1a;white-space:pre;">8</div><div style="left:-90px;top:391.63px;width:400px;text-align:right;font-size:10.6px;line-height:10.6px;color:#1a1a1a;white-space:pre;">476,00 €</div><div style="left:316px;top:391.63px;width:63px;text-align:center;font-size:10.6px;line-height:10.6px;color:#1a1a1a;white-space:pre;">19%</div><div style="left:36px;top:391.63px;width:400px;text-align:right;font-size:10.6px;line-height:10.6px;color:#1a1a1a;white-space:pre;">76,00 €</div><div style="left:101px;top:391.63px;width:400px;text-align:right;font-size:10.6px;line-height:10.6px;color:#1a1a1a;white-space:pre;">400,00 €</div><div style="left:510px;top:392.01px;font-size:10.5px;line-height:10.5px;color:#1a1a1a;white-space:pre;">Kopiergeräte - Variante 2</div><div style="left:847px;top:392.01px;font-size:10.5px;line-height:10.5px;color:#1a1a1a;white-space:pre;">Geringwertige Wirtschaftsgüter (GWG)</div><div style="left:1225px;top:392.01px;font-size:10.5px;line-height:10.5px;color:#1a1a1a;white-space:pre;width:40px;overflow:hidden">Geringwertige</div><div style="left:90px;top:407.06px;width:81px;text-align:center;font-size:10.8px;line-height:10.8px;color:#1a1a1a;white-space:pre;">01.10.2018</div><div style="left:172px;top:406.63px;width:70px;text-align:center;font-size:10.6px;line-height:10.6px;color:#1a1a1a;white-space:pre;">10</div><div style="left:-90px;top:406.63px;width:400px;text-align:right;font-size:10.6px;line-height:10.6px;color:#1a1a1a;white-space:pre;">357,00 €</div><div style="left:316px;top:406.63px;width:63px;text-align:center;font-size:10.6px;line-height:10.6px;color:#1a1a1a;white-space:pre;">19%</div><div style="left:36px;top:406.63px;width:400px;text-align:right;font-size:10.6px;line-height:10.6px;color:#1a1a1a;white-space:pre;">57,00 €</div><div style="left:101px;top:406.63px;width:400px;text-align:right;font-size:10.6px;line-height:10.6px;color:#1a1a1a;white-space:pre;">300,00 €</div><div style="left:510px;top:407.01px;font-size:10.5px;line-height:10.5px;color:#1a1a1a;white-space:pre;">Seminarkosten "Denken wie ein Unternehmer"</div><div style="left:847px;top:407.01px;font-size:10.5px;line-height:10.5px;color:#1a1a1a;white-space:pre;">Fortbildungskosten (ohne Reisekosten)</div><div style="left:1225px;top:407.01px;font-size:10.5px;line-height:10.5px;color:#1a1a1a;white-space:pre;width:40px;overflow:hidden">Fortbildungskosten</div><div style="left:90px;top:422.06px;width:81px;text-align:center;font-size:10.8px;line-height:10.8px;color:#1a1a1a;white-space:pre;">20.10.2018</div><div style="left:172px;top:421.63px;width:70px;text-align:center;font-size:10.6px;line-height:10.6px;color:#1a1a1a;white-space:pre;">10</div><div style="left:-90px;top:421.63px;width:400px;text-align:right;font-size:10.6px;line-height:10.6px;color:#1a1a1a;white-space:pre;">150,00 €</div><div style="left:316px;top:421.63px;width:63px;text-align:center;font-size:10.6px;line-height:10.6px;color:#1a1a1a;white-space:pre;">0%</div><div style="left:17px;top:421.63px;width:400px;text-align:right;font-size:10.6px;line-height:10.6px;color:#1a1a1a;white-space:pre;">-</div><div style="left:36px;top:421.63px;width:400px;text-align:right;font-size:10.6px;line-height:10.6px;color:#1a1a1a;white-space:pre;">€</div><div style="left:101px;top:421.63px;width:400px;text-align:right;font-size:10.6px;line-height:10.6px;color:#1a1a1a;white-space:pre;">150,00 €</div><div style="left:510px;top:422.01px;font-size:10.5px;line-height:10.5px;color:#1a1a1a;white-space:pre;">Zugticket Leipzig-Wien</div><div style="left:847px;top:422.01px;font-size:10.5px;line-height:10.5px;color:#1a1a1a;white-space:pre;">Sonstige tatsächliche Fahrtkosten</div><div style="left:1225px;top:422.01px;font-size:10.5px;line-height:10.5px;color:#1a1a1a;white-space:pre;width:40px;overflow:hidden">Fahrtkosten</div><div style="left:90px;top:437.06px;width:81px;text-align:center;font-size:10.8px;line-height:10.8px;color:#1a1a1a;white-space:pre;">27.10.2018</div><div style="left:172px;top:436.63px;width:70px;text-align:center;font-size:10.6px;line-height:10.6px;color:#1a1a1a;white-space:pre;">10</div><div style="left:-90px;top:436.63px;width:400px;text-align:right;font-size:10.6px;line-height:10.6px;color:#1a1a1a;white-space:pre;">119,00 €</div><div style="left:316px;top:436.63px;width:63px;text-align:center;font-size:10.6px;line-height:10.6px;color:#1a1a1a;white-space:pre;">19%</div><div style="left:36px;top:436.63px;width:400px;text-align:right;font-size:10.6px;line-height:10.6px;color:#1a1a1a;white-space:pre;">19,00 €</div><div style="left:101px;top:436.63px;width:400px;text-align:right;font-size:10.6px;line-height:10.6px;color:#1a1a1a;white-space:pre;">100,00 €</div><div style="left:510px;top:437.01px;font-size:10.5px;line-height:10.5px;color:#1a1a1a;white-space:pre;">Leihwagen / Wien - Erfurt</div><div style="left:847px;top:437.01px;font-size:10.5px;line-height:10.5px;color:#1a1a1a;white-space:pre;">Sonstige tatsächliche Fahrtkosten</div><div style="left:1225px;top:437.01px;font-size:10.5px;line-height:10.5px;color:#1a1a1a;white-space:pre;width:40px;overflow:hidden">Fahrtkosten</div><div style="left:90px;top:452.06px;width:81px;text-align:center;font-size:10.8px;line-height:10.8px;color:#1a1a1a;white-space:pre;">01.11.2018</div><div style="left:172px;top:451.63px;width:70px;text-align:center;font-size:10.6px;line-height:10.6px;color:#1a1a1a;white-space:pre;">11</div><div style="left:-90px;top:451.63px;width:400px;text-align:right;font-size:10.6px;line-height:10.6px;color:#1a1a1a;white-space:pre;">595,00 €</div><div style="left:316px;top:451.63px;width:63px;text-align:center;font-size:10.6px;line-height:10.6px;color:#1a1a1a;white-space:pre;">19%</div><div style="left:36px;top:451.63px;width:400px;text-align:right;font-size:10.6px;line-height:10.6px;color:#1a1a1a;white-space:pre;">95,00 €</div><div style="left:101px;top:451.63px;width:400px;text-align:right;font-size:10.6px;line-height:10.6px;color:#1a1a1a;white-space:pre;">500,00 €</div><div style="left:510px;top:452.01px;font-size:10.5px;line-height:10.5px;color:#1a1a1a;white-space:pre;">Einkauf Software für IT-Schulung / 5 Lizenzen</div><div style="left:847px;top:452.01px;font-size:10.5px;line-height:10.5px;color:#1a1a1a;white-space:pre;">Waren, Rohstoffe, Hilfsstoffe</div><div style="left:1225px;top:452.01px;font-size:10.5px;line-height:10.5px;color:#1a1a1a;white-space:pre;width:40px;overflow:hidden">Waren, Rohstoffe</div><div style="left:90px;top:467.06px;width:81px;text-align:center;font-size:10.8px;line-height:10.8px;color:#1a1a1a;white-space:pre;">15.12.2018</div><div style="left:172px;top:466.63px;width:70px;text-align:center;font-size:10.6px;line-height:10.6px;color:#1a1a1a;white-space:pre;">12</div><div style="left:-90px;top:466.63px;width:400px;text-align:right;font-size:10.6px;line-height:10.6px;color:#1a1a1a;white-space:pre;">1.000,00 €</div><div style="left:316px;top:466.63px;width:63px;text-align:center;font-size:10.6px;line-height:10.6px;color:#1a1a1a;white-space:pre;">0%</div><div style="left:17px;top:466.63px;width:400px;text-align:right;font-size:10.6px;line-height:10.6px;color:#1a1a1a;white-space:pre;">-</div><div style="left:36px;top:466.63px;width:400px;text-align:right;font-size:10.6px;line-height:10.6px;color:#1a1a1a;white-space:pre;">€</div><div style="left:101px;top:466.63px;width:400px;text-align:right;font-size:10.6px;line-height:10.6px;color:#1a1a1a;white-space:pre;">1.000,00 €</div><div style="left:510px;top:467.01px;font-size:10.5px;line-height:10.5px;color:#1a1a1a;white-space:pre;">Lohn Dezember Herr Mustermann</div><div style="left:847px;top:467.01px;font-size:10.5px;line-height:10.5px;color:#1a1a1a;white-space:pre;">Personalkosten</div><div style="left:1225px;top:467.01px;font-size:10.5px;line-height:10.5px;color:#1a1a1a;white-space:pre;width:40px;overflow:hidden">Personalkosten</div><div style="left:90px;top:482.06px;width:81px;text-align:center;font-size:10.8px;line-height:10.8px;color:#1a1a1a;white-space:pre;">15.12.2018</div><div style="left:172px;top:481.63px;width:70px;text-align:center;font-size:10.6px;line-height:10.6px;color:#1a1a1a;white-space:pre;">12</div><div style="left:-90px;top:481.63px;width:400px;text-align:right;font-size:10.6px;line-height:10.6px;color:#1a1a1a;white-space:pre;">595,00 €</div><div style="left:316px;top:481.63px;width:63px;text-align:center;font-size:10.6px;line-height:10.6px;color:#1a1a1a;white-space:pre;">19%</div><div style="left:36px;top:481.63px;width:400px;text-align:right;font-size:10.6px;line-height:10.6px;color:#1a1a1a;white-space:pre;">95,00 €</div><div style="left:101px;top:481.63px;width:400px;text-align:right;font-size:10.6px;line-height:10.6px;color:#1a1a1a;white-space:pre;">500,00 €</div><div style="left:510px;top:482.01px;font-size:10.5px;line-height:10.5px;color:#1a1a1a;white-space:pre;">Büromiete</div><div style="left:847px;top:482.01px;font-size:10.5px;line-height:10.5px;color:#1a1a1a;white-space:pre;">Raumkosten - Miete / Pacht für Geschäftsräume &amp; betriebl. genutzte Grundst.</div><div style="left:1225px;top:482.01px;font-size:10.5px;line-height:10.5px;color:#1a1a1a;white-space:pre;width:40px;overflow:hidden">Raumkosten</div><div style="left:90px;top:497.06px;width:81px;text-align:center;font-size:10.8px;line-height:10.8px;color:#1a1a1a;white-space:pre;">15.12.2018</div><div style="left:172px;top:496.63px;width:70px;text-align:center;font-size:10.6px;line-height:10.6px;color:#1a1a1a;white-space:pre;">12</div><div style="left:-90px;top:496.63px;width:400px;text-align:right;font-size:10.6px;line-height:10.6px;color:#1a1a1a;white-space:pre;">476,00 €</div><div style="left:316px;top:496.63px;width:63px;text-align:center;font-size:10.6px;line-height:10.6px;color:#1a1a1a;white-space:pre;">19%</div><div style="left:36px;top:496.63px;width:400px;text-align:right;font-size:10.6px;line-height:10.6px;color:#1a1a1a;white-space:pre;">76,00 €</div><div style="left:101px;top:496.63px;width:400px;text-align:right;font-size:10.6px;line-height:10.6px;color:#1a1a1a;white-space:pre;">400,00 €</div><div style="left:510px;top:497.01px;font-size:10.5px;line-height:10.5px;color:#1a1a1a;white-space:pre;">Rechtsberatung Notar Dr. Recht</div><div style="left:847px;top:497.01px;font-size:10.5px;line-height:10.5px;color:#1a1a1a;white-space:pre;">Rechts- &amp; Steuerberatung, Buchführung</div><div style="left:1225px;top:497.01px;font-size:10.5px;line-height:10.5px;color:#1a1a1a;white-space:pre;width:40px;overflow:hidden">Rechts- &amp; Steuer</div><div style="left:90px;top:512.06px;width:81px;text-align:center;font-size:10.8px;line-height:10.8px;color:#1a1a1a;white-space:pre;">15.12.2018</div><div style="left:172px;top:511.63px;width:70px;text-align:center;font-size:10.6px;line-height:10.6px;color:#1a1a1a;white-space:pre;">12</div><div style="left:-90px;top:511.63px;width:400px;text-align:right;font-size:10.6px;line-height:10.6px;color:#1a1a1a;white-space:pre;">300,00 €</div><div style="left:316px;top:511.63px;width:63px;text-align:center;font-size:10.6px;line-height:10.6px;color:#1a1a1a;white-space:pre;">0%</div><div style="left:17px;top:511.63px;width:400px;text-align:right;font-size:10.6px;line-height:10.6px;color:#1a1a1a;white-space:pre;">-</div><div style="left:36px;top:511.63px;width:400px;text-align:right;font-size:10.6px;line-height:10.6px;color:#1a1a1a;white-space:pre;">€</div><div style="left:101px;top:511.63px;width:400px;text-align:right;font-size:10.6px;line-height:10.6px;color:#1a1a1a;white-space:pre;">300,00 €</div><div style="left:510px;top:512.01px;font-size:10.5px;line-height:10.5px;color:#1a1a1a;white-space:pre;">Betriebshaftpflichtversicherung</div><div style="left:847px;top:512.01px;font-size:10.5px;line-height:10.5px;color:#1a1a1a;white-space:pre;">Beiträge, Gebühren, Abgaben, Versich. (ohne Gebäude und Kfz)</div><div style="left:1225px;top:512.01px;font-size:10.5px;line-height:10.5px;color:#1a1a1a;white-space:pre;width:40px;overflow:hidden">Beiträge</div><div style="left:90px;top:527.06px;width:81px;text-align:center;font-size:10.8px;line-height:10.8px;color:#1a1a1a;white-space:pre;">15.12.2018</div><div style="left:172px;top:526.63px;width:70px;text-align:center;font-size:10.6px;line-height:10.6px;color:#1a1a1a;white-space:pre;">12</div><div style="left:-90px;top:526.63px;width:400px;text-align:right;font-size:10.6px;line-height:10.6px;color:#1a1a1a;white-space:pre;">357,00 €</div><div style="left:316px;top:526.63px;width:63px;text-align:center;font-size:10.6px;line-height:10.6px;color:#1a1a1a;white-space:pre;">19%</div><div style="left:36px;top:526.63px;width:400px;text-align:right;font-size:10.6px;line-height:10.6px;color:#1a1a1a;white-space:pre;">57,00 €</div><div style="left:101px;top:526.63px;width:400px;text-align:right;font-size:10.6px;line-height:10.6px;color:#1a1a1a;white-space:pre;">300,00 €</div><div style="left:510px;top:527.01px;font-size:10.5px;line-height:10.5px;color:#1a1a1a;white-space:pre;">Design + Druck Visitenkarten</div><div style="left:847px;top:527.01px;font-size:10.5px;line-height:10.5px;color:#1a1a1a;white-space:pre;">Werbekosten</div><div style="left:1225px;top:527.01px;font-size:10.5px;line-height:10.5px;color:#1a1a1a;white-space:pre;width:40px;overflow:hidden">Werbekosten</div><div style="left:90px;top:542.06px;width:81px;text-align:center;font-size:10.8px;line-height:10.8px;color:#1a1a1a;white-space:pre;">15.12.2018</div><div style="left:172px;top:541.63px;width:70px;text-align:center;font-size:10.6px;line-height:10.6px;color:#1a1a1a;white-space:pre;">12</div><div style="left:-90px;top:541.63px;width:400px;text-align:right;font-size:10.6px;line-height:10.6px;color:#1a1a1a;white-space:pre;">59,50 €</div><div style="left:316px;top:541.63px;width:63px;text-align:center;font-size:10.6px;line-height:10.6px;color:#1a1a1a;white-space:pre;">19%</div><div style="left:36px;top:541.63px;width:400px;text-align:right;font-size:10.6px;line-height:10.6px;color:#1a1a1a;white-space:pre;">9,50 €</div><div style="left:101px;top:541.63px;width:400px;text-align:right;font-size:10.6px;line-height:10.6px;color:#1a1a1a;white-space:pre;">50,00 €</div><div style="left:510px;top:542.01px;font-size:10.5px;line-height:10.5px;color:#1a1a1a;white-space:pre;">Leasing Beamer</div><div style="left:847px;top:542.01px;font-size:10.5px;line-height:10.5px;color:#1a1a1a;white-space:pre;">Miete / Leasing für bewegliche Wirtschaftsgüter (ohne Kfz)</div><div style="left:1225px;top:542.01px;font-size:10.5px;line-height:10.5px;color:#1a1a1a;white-space:pre;width:40px;overflow:hidden">Miete / Leasing</div><div style="left:90px;top:557.06px;width:81px;text-align:center;font-size:10.8px;line-height:10.8px;color:#1a1a1a;white-space:pre;">15.12.2018</div><div style="left:172px;top:556.63px;width:70px;text-align:center;font-size:10.6px;line-height:10.6px;color:#1a1a1a;white-space:pre;">12</div><div style="left:-90px;top:556.63px;width:400px;text-align:right;font-size:10.6px;line-height:10.6px;color:#1a1a1a;white-space:pre;">2,00 €</div><div style="left:316px;top:556.63px;width:63px;text-align:center;font-size:10.6px;line-height:10.6px;color:#1a1a1a;white-space:pre;">0%</div><div style="left:17px;top:556.63px;width:400px;text-align:right;font-size:10.6px;line-height:10.6px;color:#1a1a1a;white-space:pre;">-</div><div style="left:36px;top:556.63px;width:400px;text-align:right;font-size:10.6px;line-height:10.6px;color:#1a1a1a;white-space:pre;">€</div><div style="left:101px;top:556.63px;width:400px;text-align:right;font-size:10.6px;line-height:10.6px;color:#1a1a1a;white-space:pre;">2,00 €</div><div style="left:510px;top:557.01px;font-size:10.5px;line-height:10.5px;color:#1a1a1a;white-space:pre;">Kontoführungsgebühren</div><div style="left:847px;top:557.01px;font-size:10.5px;line-height:10.5px;color:#1a1a1a;white-space:pre;">übrige, unbeschränkt abziehbare Betriebsausgaben</div><div style="left:1225px;top:557.01px;font-size:10.5px;line-height:10.5px;color:#1a1a1a;white-space:pre;width:40px;overflow:hidden">übrige Betriebsausgaben</div><div style="left:172px;top:571.63px;width:70px;text-align:center;font-size:10.6px;line-height:10.6px;color:#1a1a1a;white-space:pre;">0</div><div style="left:17px;top:571.63px;width:400px;text-align:right;font-size:10.6px;line-height:10.6px;color:#1a1a1a;white-space:pre;">-</div><div style="left:36px;top:571.63px;width:400px;text-align:right;font-size:10.6px;line-height:10.6px;color:#1a1a1a;white-space:pre;">€</div><div style="left:81px;top:571.63px;width:400px;text-align:right;font-size:10.6px;line-height:10.6px;color:#1a1a1a;white-space:pre;">-</div><div style="left:101px;top:571.63px;width:400px;text-align:right;font-size:10.6px;line-height:10.6px;color:#1a1a1a;white-space:pre;">€</div><div style="left:172px;top:586.63px;width:70px;text-align:center;font-size:10.6px;line-height:10.6px;color:#1a1a1a;white-space:pre;">0</div><div style="left:17px;top:586.63px;width:400px;text-align:right;font-size:10.6px;line-height:10.6px;color:#1a1a1a;white-space:pre;">-</div><div style="left:36px;top:586.63px;width:400px;text-align:right;font-size:10.6px;line-height:10.6px;color:#1a1a1a;white-space:pre;">€</div><div style="left:81px;top:586.63px;width:400px;text-align:right;font-size:10.6px;line-height:10.6px;color:#1a1a1a;white-space:pre;">-</div><div style="left:101px;top:586.63px;width:400px;text-align:right;font-size:10.6px;line-height:10.6px;color:#1a1a1a;white-space:pre;">€</div><div style="left:172px;top:601.63px;width:70px;text-align:center;font-size:10.6px;line-height:10.6px;color:#1a1a1a;white-space:pre;">0</div><div style="left:17px;top:601.63px;width:400px;text-align:right;font-size:10.6px;line-height:10.6px;color:#1a1a1a;white-space:pre;">-</div><div style="left:36px;top:601.63px;width:400px;text-align:right;font-size:10.6px;line-height:10.6px;color:#1a1a1a;white-space:pre;">€</div><div style="left:81px;top:601.63px;width:400px;text-align:right;font-size:10.6px;line-height:10.6px;color:#1a1a1a;white-space:pre;">-</div><div style="left:101px;top:601.63px;width:400px;text-align:right;font-size:10.6px;line-height:10.6px;color:#1a1a1a;white-space:pre;">€</div><div style="left:172px;top:616.63px;width:70px;text-align:center;font-size:10.6px;line-height:10.6px;color:#1a1a1a;white-space:pre;">0</div><div style="left:17px;top:616.63px;width:400px;text-align:right;font-size:10.6px;line-height:10.6px;color:#1a1a1a;white-space:pre;">-</div><div style="left:36px;top:616.63px;width:400px;text-align:right;font-size:10.6px;line-height:10.6px;color:#1a1a1a;white-space:pre;">€</div><div style="left:81px;top:616.63px;width:400px;text-align:right;font-size:10.6px;line-height:10.6px;color:#1a1a1a;white-space:pre;">-</div><div style="left:101px;top:616.63px;width:400px;text-align:right;font-size:10.6px;line-height:10.6px;color:#1a1a1a;white-space:pre;">€</div><div style="left:172px;top:631.63px;width:70px;text-align:center;font-size:10.6px;line-height:10.6px;color:#1a1a1a;white-space:pre;">0</div><div style="left:17px;top:631.63px;width:400px;text-align:right;font-size:10.6px;line-height:10.6px;color:#1a1a1a;white-space:pre;">-</div><div style="left:36px;top:631.63px;width:400px;text-align:right;font-size:10.6px;line-height:10.6px;color:#1a1a1a;white-space:pre;">€</div><div style="left:81px;top:631.63px;width:400px;text-align:right;font-size:10.6px;line-height:10.6px;color:#1a1a1a;white-space:pre;">-</div><div style="left:101px;top:631.63px;width:400px;text-align:right;font-size:10.6px;line-height:10.6px;color:#1a1a1a;white-space:pre;">€</div><div style="left:172px;top:646.63px;width:70px;text-align:center;font-size:10.6px;line-height:10.6px;color:#1a1a1a;white-space:pre;">0</div><div style="left:17px;top:646.63px;width:400px;text-align:right;font-size:10.6px;line-height:10.6px;color:#1a1a1a;white-space:pre;">-</div><div style="left:36px;top:646.63px;width:400px;text-align:right;font-size:10.6px;line-height:10.6px;color:#1a1a1a;white-space:pre;">€</div><div style="left:81px;top:646.63px;width:400px;text-align:right;font-size:10.6px;line-height:10.6px;color:#1a1a1a;white-space:pre;">-</div><div style="left:101px;top:646.63px;width:400px;text-align:right;font-size:10.6px;line-height:10.6px;color:#1a1a1a;white-space:pre;">€</div><div style="left:172px;top:661.63px;width:70px;text-align:center;font-size:10.6px;line-height:10.6px;color:#1a1a1a;white-space:pre;">0</div><div style="left:17px;top:661.63px;width:400px;text-align:right;font-size:10.6px;line-height:10.6px;color:#1a1a1a;white-space:pre;">-</div><div style="left:36px;top:661.63px;width:400px;text-align:right;font-size:10.6px;line-height:10.6px;color:#1a1a1a;white-space:pre;">€</div><div style="left:81px;top:661.63px;width:400px;text-align:right;font-size:10.6px;line-height:10.6px;color:#1a1a1a;white-space:pre;">-</div><div style="left:101px;top:661.63px;width:400px;text-align:right;font-size:10.6px;line-height:10.6px;color:#1a1a1a;white-space:pre;">€</div><div style="left:172px;top:676.63px;width:70px;text-align:center;font-size:10.6px;line-height:10.6px;color:#1a1a1a;white-space:pre;">0</div><div style="left:17px;top:676.63px;width:400px;text-align:right;font-size:10.6px;line-height:10.6px;color:#1a1a1a;white-space:pre;">-</div><div style="left:36px;top:676.63px;width:400px;text-align:right;font-size:10.6px;line-height:10.6px;color:#1a1a1a;white-space:pre;">€</div><div style="left:81px;top:676.63px;width:400px;text-align:right;font-size:10.6px;line-height:10.6px;color:#1a1a1a;white-space:pre;">-</div><div style="left:101px;top:676.63px;width:400px;text-align:right;font-size:10.6px;line-height:10.6px;color:#1a1a1a;white-space:pre;">€</div><div style="left:172px;top:691.63px;width:70px;text-align:center;font-size:10.6px;line-height:10.6px;color:#1a1a1a;white-space:pre;">0</div><div style="left:17px;top:691.63px;width:400px;text-align:right;font-size:10.6px;line-height:10.6px;color:#1a1a1a;white-space:pre;">-</div><div style="left:36px;top:691.63px;width:400px;text-align:right;font-size:10.6px;line-height:10.6px;color:#1a1a1a;white-space:pre;">€</div><div style="left:81px;top:691.63px;width:400px;text-align:right;font-size:10.6px;line-height:10.6px;color:#1a1a1a;white-space:pre;">-</div><div style="left:101px;top:691.63px;width:400px;text-align:right;font-size:10.6px;line-height:10.6px;color:#1a1a1a;white-space:pre;">€</div><div style="left:172px;top:706.63px;width:70px;text-align:center;font-size:10.6px;line-height:10.6px;color:#1a1a1a;white-space:pre;">0</div><div style="left:17px;top:706.63px;width:400px;text-align:right;font-size:10.6px;line-height:10.6px;color:#1a1a1a;white-space:pre;">-</div><div style="left:36px;top:706.63px;width:400px;text-align:right;font-size:10.6px;line-height:10.6px;color:#1a1a1a;white-space:pre;">€</div><div style="left:81px;top:706.63px;width:400px;text-align:right;font-size:10.6px;line-height:10.6px;color:#1a1a1a;white-space:pre;">-</div><div style="left:101px;top:706.63px;width:400px;text-align:right;font-size:10.6px;line-height:10.6px;color:#1a1a1a;white-space:pre;">€</div><div style="left:172px;top:721.63px;width:70px;text-align:center;font-size:10.6px;line-height:10.6px;color:#1a1a1a;white-space:pre;">0</div><div style="left:17px;top:721.63px;width:400px;text-align:right;font-size:10.6px;line-height:10.6px;color:#1a1a1a;white-space:pre;">-</div><div style="left:36px;top:721.63px;width:400px;text-align:right;font-size:10.6px;line-height:10.6px;color:#1a1a1a;white-space:pre;">€</div><div style="left:81px;top:721.63px;width:400px;text-align:right;font-size:10.6px;line-height:10.6px;color:#1a1a1a;white-space:pre;">-</div><div style="left:101px;top:721.63px;width:400px;text-align:right;font-size:10.6px;line-height:10.6px;color:#1a1a1a;white-space:pre;">€</div><div style="left:172px;top:736.63px;width:70px;text-align:center;font-size:10.6px;line-height:10.6px;color:#1a1a1a;white-space:pre;">0</div><div style="left:17px;top:736.63px;width:400px;text-align:right;font-size:10.6px;line-height:10.6px;color:#1a1a1a;white-space:pre;">-</div><div style="left:36px;top:736.63px;width:400px;text-align:right;font-size:10.6px;line-height:10.6px;color:#1a1a1a;white-space:pre;">€</div><div style="left:81px;top:736.63px;width:400px;text-align:right;font-size:10.6px;line-height:10.6px;color:#1a1a1a;white-space:pre;">-</div><div style="left:101px;top:736.63px;width:400px;text-align:right;font-size:10.6px;line-height:10.6px;color:#1a1a1a;white-space:pre;">€</div><div style="left:172px;top:751.63px;width:70px;text-align:center;font-size:10.6px;line-height:10.6px;color:#1a1a1a;white-space:pre;">0</div><div style="left:17px;top:751.63px;width:400px;text-align:right;font-size:10.6px;line-height:10.6px;color:#1a1a1a;white-space:pre;">-</div><div style="left:36px;top:751.63px;width:400px;text-align:right;font-size:10.6px;line-height:10.6px;color:#1a1a1a;white-space:pre;">€</div><div style="left:81px;top:751.63px;width:400px;text-align:right;font-size:10.6px;line-height:10.6px;color:#1a1a1a;white-space:pre;">-</div><div style="left:101px;top:751.63px;width:400px;text-align:right;font-size:10.6px;line-height:10.6px;color:#1a1a1a;white-space:pre;">€</div><div style="left:172px;top:766.63px;width:70px;text-align:center;font-size:10.6px;line-height:10.6px;color:#1a1a1a;white-space:pre;">0</div><div style="left:17px;top:766.63px;width:400px;text-align:right;font-size:10.6px;line-height:10.6px;color:#1a1a1a;white-space:pre;">-</div><div style="left:36px;top:766.63px;width:400px;text-align:right;font-size:10.6px;line-height:10.6px;color:#1a1a1a;white-space:pre;">€</div><div style="left:81px;top:766.63px;width:400px;text-align:right;font-size:10.6px;line-height:10.6px;color:#1a1a1a;white-space:pre;">-</div><div style="left:101px;top:766.63px;width:400px;text-align:right;font-size:10.6px;line-height:10.6px;color:#1a1a1a;white-space:pre;">€</div><div style="left:1265px;top:203px;width:17px;height:568px;background:#e6e6e6"></div><div style="left:1268px;top:206px;width:14px;height:15px;background:#f6f6f6;border:1px solid #d4d4d4;box-sizing:border-box"></div><svg style="left:1271px;top:211px;" width="9" height="5" viewBox="0 0 9 5"><path d="M0 4.5 L4.5 0 L9 4.5 Z" fill="#777"/></svg><div style="left:1268px;top:221px;width:14px;height:17px;background:#f8f8f8;border:1px solid #d4d4d4;box-sizing:border-box"></div><div style="left:1268px;top:238px;width:14px;height:518px;background:#dcdcdc"></div><div style="left:1268px;top:756px;width:14px;height:15px;background:#f6f6f6;border:1px solid #d4d4d4;box-sizing:border-box"></div><svg style="left:1271px;top:761px;" width="9" height="5" viewBox="0 0 9 5"><path d="M0 0 L4.5 4.5 L9 0 Z" fill="#777"/></svg><div style="left:3px;top:771px;width:1279px;height:28px;background:#e9e9e9"></div><div style="left:3px;top:771px;width:1279px;height:1px;background:#a9a9a9"></div><svg style="left:27px;top:781px;" width="5" height="8" viewBox="0 0 5 8"><path d="M4.5 0 V8 L0 4 Z" fill="#cfcfcf"/></svg><svg style="left:56px;top:781px;" width="5" height="8" viewBox="0 0 5 8"><path d="M0 0 V8 L4.5 4 Z" fill="#1f4d37"/></svg><div style="left:100px;top:773px;width:1px;height:24px;background:#cfcfcf"></div><div style="left:103px;top:774px;width:81px;height:22px;background:#000"></div><div style="left:102px;top:778.09px;width:81px;text-align:center;font-size:12.3px;line-height:12.3px;color:#fff;white-space:pre;">Lies mich!</div><div style="left:189px;top:774px;width:103px;height:22px;background:#000"></div><div style="left:188px;top:778.09px;width:103px;text-align:center;font-size:12.3px;line-height:12.3px;color:#fff;white-space:pre;">Einstellungen</div><div style="left:297px;top:774px;width:75px;height:22px;background:#7232a6"></div><div style="left:296px;top:778.09px;width:75px;text-align:center;font-size:12.3px;line-height:12.3px;color:#fff;white-space:pre;">Beispiele</div><div style="left:375px;top:774px;width:48px;height:22px;background:#e9e900"></div><div style="left:374px;top:778.09px;width:48px;text-align:center;font-size:12.3px;line-height:12.3px;color:#222;white-space:pre;">Einn</div><div style="left:482px;top:774px;width:59px;height:22px;background:#e9e900"></div><div style="left:481px;top:778.09px;width:59px;text-align:center;font-size:12.3px;line-height:12.3px;color:#222;white-space:pre;">Bewirt</div><div style="left:545px;top:774px;width:132px;height:22px;background:#e9e900"></div><div style="left:544px;top:778.09px;width:132px;text-align:center;font-size:12.3px;line-height:12.3px;color:#222;white-space:pre;">VPMA - pausch.FK</div><div style="left:681px;top:774px;width:114px;height:22px;background:#e9e900"></div><div style="left:680px;top:778.09px;width:114px;text-align:center;font-size:12.3px;line-height:12.3px;color:#222;white-space:pre;">GWG-Sammelp</div><div style="left:798px;top:774px;width:95px;height:22px;background:#e9e900"></div><div style="left:797px;top:778.09px;width:95px;text-align:center;font-size:12.3px;line-height:12.3px;color:#222;white-space:pre;">Anlageverm</div><div style="left:186px;top:776px;width:1px;height:19px;background:#b4b4b4"></div><div style="left:294px;top:776px;width:1px;height:19px;background:#b4b4b4"></div><div style="left:373px;top:776px;width:1px;height:19px;background:#b4b4b4"></div><div style="left:543px;top:776px;width:1px;height:19px;background:#b4b4b4"></div><div style="left:679px;top:776px;width:1px;height:19px;background:#b4b4b4"></div><div style="left:796px;top:776px;width:1px;height:19px;background:#b4b4b4"></div><div style="left:894px;top:776px;width:1px;height:19px;background:#b4b4b4"></div><div style="left:897px;top:774px;width:16px;height:22px;background:#e9e900"></div><div style="left:909px;top:778.09px;font-size:12.3px;line-height:12.3px;color:#222;white-space:pre;width:4px;overflow:hidden">G</div><div style="left:424px;top:771px;width:1px;height:25px;background:#a0a0a0"></div><div style="left:480px;top:771px;width:1px;height:25px;background:#a0a0a0"></div><div style="left:425px;top:771px;width:55px;height:25px;background:#f2f2f2"></div><div style="left:425px;top:794px;width:55px;height:2px;background:#2a6446"></div><div style="left:424px;top:778.09px;width:55px;text-align:center;font-size:12.3px;line-height:12.3px;color:#2a6446;white-space:pre;font-weight:bold">Ausg</div><div style="left:921px;top:778.84px;font-size:12px;line-height:12px;color:#222;white-space:pre;font-weight:bold">...</div><svg style="left:945px;top:776px;" width="18" height="18" viewBox="0 0 18 18"><circle cx="9" cy="9" r="7.5" fill="none" stroke="#777" stroke-width="1.3"/><path d="M9 5 V13 M5 9 H13" stroke="#555" stroke-width="1.8"/></svg><svg style="left:981px;top:779px;" width="3" height="13" viewBox="0 0 3 13"><circle cx="1.5" cy="1.5" r="1" fill="#aaa"/><circle cx="1.5" cy="6.5" r="1" fill="#aaa"/><circle cx="1.5" cy="11.5" r="1" fill="#aaa"/></svg><div style="left:999px;top:778px;width:265px;height:15px;background:#dcdcdc"></div><div style="left:999px;top:778px;width:15px;height:15px;background:#f6f6f6;border:1px solid #c8c8c8;box-sizing:border-box"></div><svg style="left:1004px;top:782px;" width="5" height="8" viewBox="0 0 5 8"><path d="M4.5 0 V8 L0 4 Z" fill="#777"/></svg><div style="left:1014px;top:778px;width:129px;height:15px;background:#f3f3f3;border:1px solid #c8c8c8;box-sizing:border-box"></div><div style="left:1249px;top:778px;width:15px;height:15px;background:#f6f6f6;border:1px solid #c8c8c8;box-sizing:border-box"></div><svg style="left:1254px;top:782px;" width="5" height="8" viewBox="0 0 5 8"><path d="M0 0 V8 L4.5 4 Z" fill="#777"/></svg><div style="left:3px;top:799px;width:1279px;height:18px;background:#ececec"></div><div style="left:3px;top:799px;width:1279px;height:1px;background:#b8b8b8"></div><div style="left:7px;top:804.19px;font-size:11px;line-height:11px;color:#444;white-space:pre;">Bereit</div><div style="left:987px;top:799px;width:37px;height:19px;background:#d0d0d0"></div><svg style="left:998px;top:803px;" width="14" height="13" viewBox="0 0 14 13"><rect x="0.5" y="0.5" width="13" height="12" fill="none" stroke="#444"/><path d="M4.5 0.5 V12.5 M9 0.5 V12.5 M0.5 4.5 H13.5 M0.5 8.5 H13.5" stroke="#444"/></svg><svg style="left:1036px;top:803px;" width="14" height="13" viewBox="0 0 14 13"><rect x="0.5" y="0.5" width="13" height="12" fill="none" stroke="#444"/><rect x="3.5" y="2.5" width="7" height="8" fill="none" stroke="#444"/><path d="M5 4.5 H9 M5 6.5 H9 M5 8.5 H9" stroke="#444" stroke-width="0.8"/></svg><svg style="left:1074px;top:803px;" width="14" height="13" viewBox="0 0 14 13"><rect x="0.5" y="0.5" width="13" height="12" fill="none" stroke="#444"/><path d="M0.5 8.5 H8.5 V0.5 M3.5 0.5 V6 M6 0.5 V6" stroke="#444" fill="none"/></svg><div style="left:1105px;top:809px;width:6px;height:2px;background:#555"></div><div style="left:1115px;top:809px;width:100px;height:1px;background:#aaa"></div><div style="left:1162px;top:803px;width:5px;height:13px;background:#555"></div><div style="left:1217px;top:803.15px;font-size:14px;line-height:14px;color:#444;white-space:pre;font-weight:bold">+</div><div style="left:1237px;top:805.20px;font-size:10.4px;line-height:10.4px;color:#333;white-space:pre;">100 %</div><div style="left:0px;top:0px;width:1285px;height:1px;background:#c6e4a6"></div><div style="left:0px;top:1px;width:1285px;height:2px;background:#689656"></div><div style="left:0px;top:0px;width:1px;height:820px;background:#c2e0a0"></div><div style="left:1px;top:1px;width:2px;height:818px;background:#6b8e4e"></div><div style="left:3px;top:65px;width:1px;height:752px;background:#d8f0c8"></div><div style="left:1281px;top:65px;width:1px;height:752px;background:#d9ecc6"></div><div style="left:1282px;top:1px;width:2px;height:818px;background:#6b8456"></div><div style="left:1284px;top:0px;width:1px;height:820px;background:#c5ddb2"></div><div style="left:0px;top:816px;width:1285px;height:1px;background:#e6f8d8"></div><div style="left:0px;top:817px;width:1285px;height:2px;background:#668a4e"></div><div style="left:0px;top:819px;width:1285px;height:1px;background:#bcdca0"></div>
</body></html>
